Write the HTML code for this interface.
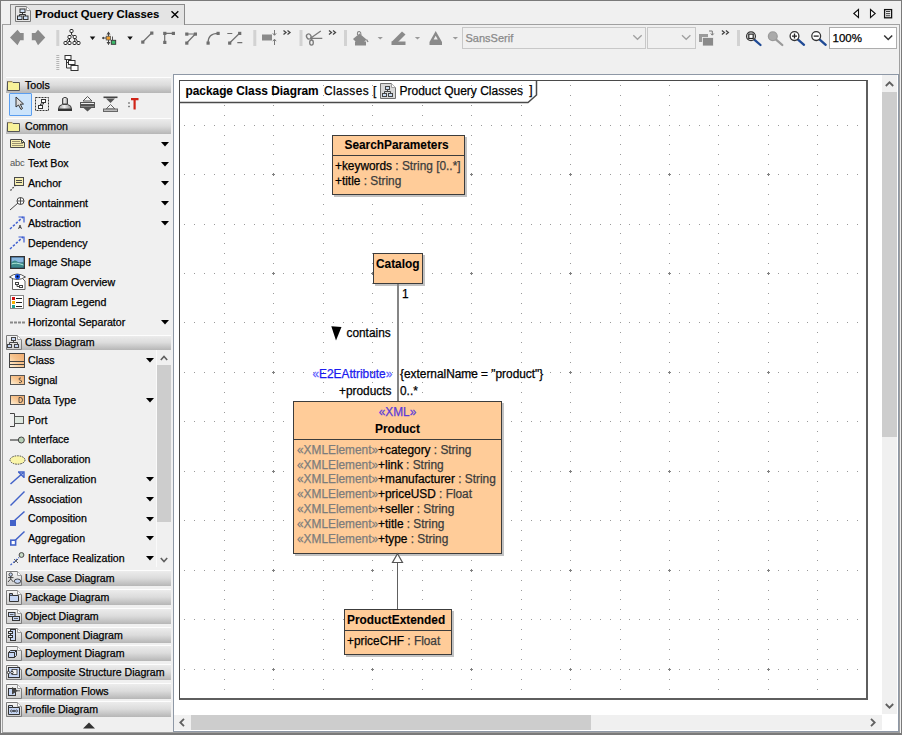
<!DOCTYPE html><html><head><meta charset='utf-8'><style>
*{margin:0;padding:0;box-sizing:border-box}
html,body{width:902px;height:735px;overflow:hidden;background:#f0f0f0;font-family:"Liberation Sans", sans-serif;}
.a{position:absolute}
.t{position:absolute;white-space:nowrap;line-height:1;-webkit-text-stroke:0.25px currentColor}
svg{position:absolute;overflow:visible}
</style></head><body><div class="a" style="left:0;top:0;width:902px;height:1px;background:#7a7a7a"></div><div class="a" style="left:0;top:0;width:1px;height:735px;background:#7a7a7a"></div><div class="a" style="left:901px;top:0;width:1px;height:735px;background:#7a7a7a"></div><div class="a" style="left:0;top:733px;width:902px;height:2px;background:#7a7a7a"></div><div class="a" style="left:2px;top:24px;width:898px;height:709px;border:1px solid #a0a0a0;"></div><div class="a" style="left:10px;top:4px;width:175px;height:21px;background:#e4e4e4;border:1px solid #8a8a8a;border-bottom:none"></div><div class="a" style="left:11px;top:24px;width:173px;height:1px;background:#e4e4e4"></div><svg style="left:15px;top:6px" width="16" height="16" viewBox="0 0 16 16">
<path d="M0.5 0.5 H11.5 L15.5 4.5 V15.5 H0.5 Z" fill="#e6e6e6" stroke="#7a7a7a"/>
<path d="M11.5 0.5 V4.5 H15.5" fill="#fff" stroke="#9a9a9a"/>
<rect x="5" y="3" width="5" height="3.5" fill="#cfe0f5" stroke="#333" stroke-width="1"/>
<path d="M7.5 6.5 V8.5 M4.5 8.5 H10.5 M4.5 8.5 V10 M10.5 8.5 V10" stroke="#333" fill="none"/>
<rect x="2.5" y="10" width="4.5" height="3.5" fill="#cfe0f5" stroke="#333"/>
<rect x="8.5" y="10" width="4.5" height="3.5" fill="#cfe0f5" stroke="#333"/>
</svg><div class="t" style="left:35px;top:9px;font-size:11.3px;font-weight:bold;color:#000;-webkit-text-stroke:0.1px #000">Product Query Classes</div><svg style="left:171px;top:11px" width="8" height="7" viewBox="0 0 8 7"><path d="M0.5 0.3 L7.3 6.7 M7.3 0.3 L0.5 6.7" stroke="#000" stroke-width="1.4"/></svg><svg style="left:853px;top:9px" width="40" height="10" viewBox="0 0 40 10">
<path d="M5.5 0.5 L0.8 4.5 L5.5 8.5 Z" fill="#fff" stroke="#111" stroke-width="1.1"/>
<path d="M17.5 0.5 L22.2 4.5 L17.5 8.5 Z" fill="#fff" stroke="#111" stroke-width="1.1"/>
<rect x="31.6" y="0.6" width="7" height="8.2" fill="#fff" stroke="#111" stroke-width="1.3"/>
<path d="M33 2.6 H37.2 M33 4.7 H37.2 M33 6.8 H37.2" stroke="#111" stroke-width="0.9"/>
</svg><div class="a" style="left:462px;top:27px;width:184px;height:22px;background:#f0f0f0;border:1px solid #c8c8c8"></div><div class="t" style="left:465.5px;top:32.5px;font-size:11px;color:#8a8a8a">SansSerif</div><div class="a" style="left:647px;top:27px;width:49px;height:22px;background:#f0f0f0;border:1px solid #c8c8c8"></div><div class="a" style="left:829px;top:27px;width:68px;height:22px;background:#fff;border:1px solid #adadad"></div><div class="t" style="left:832.5px;top:32.5px;font-size:11.5px;color:#000">100%</div><svg style="left:0;top:0" width="902" height="80" viewBox="0 0 902 80"><path d="M10 37.5 L17.5 29.75 L20.2 33 H23.7 V40.2 H20.2 L17.5 45.25 Z" fill="#8a8a8a"/><path d="M45.25 37.5 L38 29.75 L35.3 33 H31.8 V40.2 H35.3 L38 45.25 Z" fill="#8a8a8a"/><rect x="56.3" y="30.5" width="3" height="1" fill="#b4b4b4"/><rect x="56.3" y="32.5" width="3" height="1" fill="#b4b4b4"/><rect x="56.3" y="34.5" width="3" height="1" fill="#b4b4b4"/><rect x="56.3" y="36.5" width="3" height="1" fill="#b4b4b4"/><rect x="56.3" y="38.5" width="3" height="1" fill="#b4b4b4"/><rect x="56.3" y="40.5" width="3" height="1" fill="#b4b4b4"/><rect x="56.3" y="42.5" width="3" height="1" fill="#b4b4b4"/><rect x="56.3" y="44.5" width="3" height="1" fill="#b4b4b4"/><rect x="56.3" y="55" width="3" height="1" fill="#b4b4b4"/><rect x="56.3" y="57" width="3" height="1" fill="#b4b4b4"/><rect x="56.3" y="59" width="3" height="1" fill="#b4b4b4"/><rect x="56.3" y="61" width="3" height="1" fill="#b4b4b4"/><rect x="56.3" y="63" width="3" height="1" fill="#b4b4b4"/><rect x="56.3" y="65" width="3" height="1" fill="#b4b4b4"/><rect x="56.3" y="67" width="3" height="1" fill="#b4b4b4"/><rect x="56.3" y="69" width="3" height="1" fill="#b4b4b4"/><path d="M71.5 31 V34.5 M69.5 37 L71.5 34.5 L74.75 37 M69.5 37 L65.5 43 M69.5 37 V43 M74.75 37 V43 M74.75 37 L78.5 43" stroke="#333" stroke-width="1" fill="none"/><rect x="70.0" y="29.5" width="3" height="3" rx="0.8" fill="#fff" stroke="#222" stroke-width="1"/><rect x="68.0" y="35.5" width="3" height="3" rx="0.8" fill="#fff" stroke="#222" stroke-width="1"/><rect x="73.25" y="35.5" width="3" height="3" rx="0.8" fill="#fff" stroke="#222" stroke-width="1"/><rect x="64.0" y="41.5" width="3" height="3" rx="0.8" fill="#fff" stroke="#222" stroke-width="1"/><rect x="68.0" y="41.5" width="3" height="3" rx="0.8" fill="#fff" stroke="#222" stroke-width="1"/><rect x="73.0" y="41.5" width="3" height="3" rx="0.8" fill="#fff" stroke="#222" stroke-width="1"/><rect x="77.0" y="41.5" width="3" height="3" rx="0.8" fill="#fff" stroke="#222" stroke-width="1"/><path d="M89.8 36.5 H95.3 L92.55 40.1 Z" fill="#111"/><path d="M108.5 32 V44.5 M102 38 H107" stroke="#444" stroke-width="1"/><path d="M106.5 34.5 L108.5 31.5 L110.5 34.5 Z M106.5 42 L108.5 45 L110.5 42 Z M104 36.5 L102 38 L104 39.5 Z" fill="#444"/><rect x="106.2" y="36.2" width="4.3" height="3.8" fill="#f0a030" stroke="#555" stroke-width="0.8"/><path d="M112.5 36.5 V40" stroke="#555"/><rect x="111.3" y="40.3" width="4.4" height="4" fill="#3cb86a" stroke="#333" stroke-width="0.9"/><path d="M127.3 36.4 H132.8 L130.05 40.0 Z" fill="#111"/><path d="M142.7 42 L151.7 33" stroke="#707070" stroke-width="1.2" fill="none"/><rect x="141.2" y="40.5" width="3.2" height="3.2" fill="#6e6e6e"/><rect x="150.2" y="31.5" width="3.2" height="3.2" fill="#6e6e6e"/><path d="M164.7 42.3 V33.3 H173.3" stroke="#707070" stroke-width="1.2" fill="none"/><rect x="163.2" y="31.799999999999997" width="3.2" height="3.2" fill="#6e6e6e"/><rect x="171.8" y="31.799999999999997" width="3.2" height="3.2" fill="#6e6e6e"/><rect x="163.2" y="40.8" width="3.2" height="3.2" fill="#6e6e6e"/><path d="M186.7 34 H195.3 L186.7 43" stroke="#707070" stroke-width="1.2" fill="none"/><rect x="185.2" y="32.5" width="3.2" height="3.2" fill="#6e6e6e"/><rect x="193.8" y="32.5" width="3.2" height="3.2" fill="#6e6e6e"/><rect x="185.2" y="41.5" width="3.2" height="3.2" fill="#6e6e6e"/><path d="M208 43 Q208 33.3 218 33.3" stroke="#707070" stroke-width="1.2" fill="none"/><rect x="206.5" y="41.5" width="3.2" height="3.2" fill="#6e6e6e"/><rect x="216.5" y="31.799999999999997" width="3.2" height="3.2" fill="#6e6e6e"/><path d="M229.6 43 L239.6 33.3 M227.3 33.5 H232.3 M237.3 42.7 H242.3" stroke="#707070" stroke-width="1.2" fill="none"/><rect x="228.1" y="41.5" width="3.2" height="3.2" fill="#6e6e6e"/><rect x="238.1" y="31.799999999999997" width="3.2" height="3.2" fill="#6e6e6e"/><rect x="253.3" y="30.5" width="3" height="1" fill="#b4b4b4"/><rect x="253.3" y="32.5" width="3" height="1" fill="#b4b4b4"/><rect x="253.3" y="34.5" width="3" height="1" fill="#b4b4b4"/><rect x="253.3" y="36.5" width="3" height="1" fill="#b4b4b4"/><rect x="253.3" y="38.5" width="3" height="1" fill="#b4b4b4"/><rect x="253.3" y="40.5" width="3" height="1" fill="#b4b4b4"/><rect x="253.3" y="42.5" width="3" height="1" fill="#b4b4b4"/><rect x="253.3" y="44.5" width="3" height="1" fill="#b4b4b4"/><rect x="262" y="34.5" width="10" height="6" fill="#8a8a8a"/><path d="M274.5 30 V35 M274.5 39.5 V45 M272.8 33.3 L274.5 35.3 L276.2 33.3 M272.8 41.2 L274.5 39.2 L276.2 41.2" stroke="#777" stroke-width="1" fill="none"/><path d="M283.5 30.5 L286 32.5 L283.5 34.5 M287.5 30.5 L290 32.5 L287.5 34.5" stroke="#444" stroke-width="1.3" fill="none"/><rect x="299.5" y="30.5" width="3" height="1" fill="#b4b4b4"/><rect x="299.5" y="32.5" width="3" height="1" fill="#b4b4b4"/><rect x="299.5" y="34.5" width="3" height="1" fill="#b4b4b4"/><rect x="299.5" y="36.5" width="3" height="1" fill="#b4b4b4"/><rect x="299.5" y="38.5" width="3" height="1" fill="#b4b4b4"/><rect x="299.5" y="40.5" width="3" height="1" fill="#b4b4b4"/><rect x="299.5" y="42.5" width="3" height="1" fill="#b4b4b4"/><rect x="299.5" y="44.5" width="3" height="1" fill="#b4b4b4"/><ellipse cx="308.8" cy="36.5" rx="2.2" ry="2.6" transform="rotate(-30 308.8 36.5)" fill="none" stroke="#7a7a7a" stroke-width="1.3"/><ellipse cx="311.5" cy="42.6" rx="1.8" ry="2.6" fill="none" stroke="#7a7a7a" stroke-width="1.3"/><path d="M310.5 38.3 L320.8 31 M311.2 38.3 H322.3 M311.5 40 V38.5" stroke="#7a7a7a" stroke-width="1.3" fill="none"/><path d="M329.0 30.5 L331.5 32.5 L329.0 34.5 M333.0 30.5 L335.5 32.5 L333.0 34.5" stroke="#444" stroke-width="1.3" fill="none"/><rect x="344" y="30.5" width="3" height="1" fill="#b4b4b4"/><rect x="344" y="32.5" width="3" height="1" fill="#b4b4b4"/><rect x="344" y="34.5" width="3" height="1" fill="#b4b4b4"/><rect x="344" y="36.5" width="3" height="1" fill="#b4b4b4"/><rect x="344" y="38.5" width="3" height="1" fill="#b4b4b4"/><rect x="344" y="40.5" width="3" height="1" fill="#b4b4b4"/><rect x="344" y="42.5" width="3" height="1" fill="#b4b4b4"/><rect x="344" y="44.5" width="3" height="1" fill="#b4b4b4"/><path d="M353 39 L359.5 33.5 L366.5 39.5 L364 42 H356 Z" fill="#8a8a8a"/><rect x="355" y="41.5" width="11" height="4" fill="#8a8a8a"/><path d="M357.5 35 Q357 31 359.5 31.5 Q361 32 361 35" stroke="#888" stroke-width="1.1" fill="none"/><path d="M366.5 39.5 L368 42" stroke="#888" stroke-width="1.4"/><path d="M377.6 37 H382.90000000000003 L380.25 39.6 Z" fill="#9a9a9a"/><path d="M391.5 42 L402 31.5 L405.5 34.5 L398 42 Z" fill="#8a8a8a"/><rect x="391.5" y="41.5" width="14" height="3.5" fill="#8a8a8a"/><path d="M414.8 37 H420.1 L417.45 39.6 Z" fill="#9a9a9a"/><path d="M429.5 42 L435.7 31 L442 42 Z M433.6 39.5 H437.8 L435.7 35.8 Z" fill="#8a8a8a" fill-rule="evenodd"/><rect x="429.5" y="42" width="12.5" height="3" fill="#8a8a8a"/><path d="M452.7 37 H458.0 L455.34999999999997 39.6 Z" fill="#9a9a9a"/><path d="M633.3 35.3 L637.5 39.3 L641.7 35.3" stroke="#a0a0a0" stroke-width="1.3" fill="none"/><path d="M682 35.3 L686.2 39.3 L690.4 35.3" stroke="#a0a0a0" stroke-width="1.3" fill="none"/><rect x="699" y="34" width="9" height="8" fill="#9a9a9a"/><rect x="702.5" y="37.5" width="11" height="8.5" fill="#8a8a8a" stroke="#f0f0f0" stroke-width="0.8"/><path d="M709 31 H712.3 V35 M710.8 33.5 L712.3 35.2 L713.8 33.5" stroke="#777" stroke-width="1" fill="none"/><path d="M721.9 30.5 L724.4 32.5 L721.9 34.5 M725.9 30.5 L728.4 32.5 L725.9 34.5" stroke="#444" stroke-width="1.3" fill="none"/><rect x="737" y="30.5" width="3" height="1" fill="#b4b4b4"/><rect x="737" y="32.5" width="3" height="1" fill="#b4b4b4"/><rect x="737" y="34.5" width="3" height="1" fill="#b4b4b4"/><rect x="737" y="36.5" width="3" height="1" fill="#b4b4b4"/><rect x="737" y="38.5" width="3" height="1" fill="#b4b4b4"/><rect x="737" y="40.5" width="3" height="1" fill="#b4b4b4"/><rect x="737" y="42.5" width="3" height="1" fill="#b4b4b4"/><rect x="737" y="44.5" width="3" height="1" fill="#b4b4b4"/><path d="M754 39.3 L760.5 45.0" stroke="#1f4a95" stroke-width="2.3" stroke-linecap="round"/><circle cx="751" cy="36.3" r="4.4" fill="#fff" stroke="#333" stroke-width="1.3"/><rect x="748.8" y="34.1" width="4.4" height="4.4" fill="none" stroke="#222" stroke-width="1.2"/><path d="M775.8 39.3 L782.3 45.0" stroke="#9a9a9a" stroke-width="2.3" stroke-linecap="round"/><circle cx="772.8" cy="36.3" r="4.4" fill="#aaa" stroke="#9a9a9a" stroke-width="1.3"/><path d="M797.5 39.1 L804.0 44.8" stroke="#1f4a95" stroke-width="2.3" stroke-linecap="round"/><circle cx="794.5" cy="36.1" r="4.4" fill="#fff" stroke="#333" stroke-width="1.3"/><path d="M792 36.1 H797 M794.5 33.6 V38.6" stroke="#222" stroke-width="1.3"/><path d="M819.2 39.1 L825.7 44.8" stroke="#1f4a95" stroke-width="2.3" stroke-linecap="round"/><circle cx="816.2" cy="36.1" r="4.4" fill="#fff" stroke="#333" stroke-width="1.3"/><path d="M813.7 36.1 H818.7" stroke="#222" stroke-width="1.3"/><path d="M884.2 35.5 L888.2 39.5 L892.2 35.5" stroke="#333" stroke-width="1.5" fill="none"/><rect x="65" y="55.5" width="6" height="4" fill="#fff" stroke="#333"/><rect x="68.5" y="60.5" width="6.5" height="4" fill="#fff" stroke="#333"/><rect x="71" y="65.5" width="7" height="5" fill="#fff" stroke="#333"/><path d="M66.5 59.5 V68 H71 M66.5 62.5 H68.5" stroke="#333" fill="none"/></svg><div class="a" style="left:6px;top:77px;width:165px;height:15.6px;background:linear-gradient(#fdfdfd 0,#fdfdfd 1px,#ececec 1px,#dcdcdc 50%,#b6b6b6 100%)"></div><svg style="left:7px;top:80px" width="14" height="11" viewBox="0 0 14 11"><path d="M0.5 1.5 H5 L6 2.5 H12.5 V10.5 H0.5 Z" fill="#f7f29a" stroke="#555"/><path d="M1 2 H5" stroke="#e0c070"/></svg><div class="t" style="left:25px;top:79.98px;font-size:10.6px;color:#000">Tools</div><div class="a" style="left:9px;top:93px;width:23px;height:23px;background:#cce4fb;border:1px solid #5a9ef0;border-radius:1px"></div><svg style="left:15px;top:96px" width="10" height="15" viewBox="0 0 10 15"><path d="M1 1 L1 11 L3.5 9 L6 13.5 L7.5 12.5 L5.3 8.3 L8.5 8 Z" fill="#ddd" stroke="#333" stroke-width="1"/></svg><svg style="left:35px;top:97px" width="15" height="15" viewBox="0 0 15 15"><rect x="0.5" y="0.5" width="13" height="13" fill="none" stroke="#333" stroke-dasharray="2 1"/><rect x="6.5" y="2.5" width="4" height="3" fill="#fff" stroke="#333"/><rect x="3.5" y="8.5" width="4" height="3" fill="#fff" stroke="#333"/><path d="M8.5 5.5 V7 H5.5 V8.5" stroke="#333" fill="none"/></svg><svg style="left:57px;top:96px" width="16" height="16" viewBox="0 0 16 16"><defs><linearGradient id="sg" x1="0" y1="0" x2="1" y2="0"><stop offset="0" stop-color="#9a9a9a"/><stop offset="0.45" stop-color="#f0f0f0"/><stop offset="1" stop-color="#8a8a8a"/></linearGradient></defs><path d="M5.5 2.5 Q8 0 10.5 2.5 V8 H5.5 Z" fill="url(#sg)" stroke="#444"/><path d="M1.5 13 Q1.5 9 5.5 8.5 H10.5 Q14.5 9 14.5 13 Z" fill="url(#sg)" stroke="#444"/><rect x="1" y="13" width="14" height="2" fill="#333"/></svg><svg style="left:80px;top:96px" width="15" height="16" viewBox="0 0 15 16"><path d="M7.5 0.5 L3 5 H12 Z" fill="#f4f4f4" stroke="#555"/><rect x="0.5" y="6.5" width="14" height="2" fill="#eee" stroke="#555"/><rect x="0.5" y="9.5" width="14" height="2" fill="#888" stroke="#555"/><path d="M7.5 15.5 L3 11.5 H12 Z" fill="#555"/></svg><svg style="left:103px;top:96px" width="15" height="16" viewBox="0 0 15 16"><rect x="0.5" y="0.5" width="14" height="1.6" fill="#444"/><path d="M7.5 7 L3 2.5 H12 Z" fill="#555"/><path d="M7.5 8.5 L3 13 H12 Z" fill="#f4f4f4" stroke="#666"/><rect x="0.5" y="13" width="14" height="2.5" fill="#bbb" stroke="#666"/></svg><svg style="left:127px;top:97px" width="13" height="14" viewBox="0 0 13 14"><path d="M4 2.2 H11.5 M7.6 2 V12.5" stroke="#d02418" stroke-width="2.2"/><rect x="1.3" y="5.3" width="1.4" height="1.4" fill="#555"/><rect x="1.3" y="8.8" width="1.4" height="1.4" fill="#555"/></svg><div class="a" style="left:6px;top:118px;width:165px;height:15.5px;background:linear-gradient(#fdfdfd 0,#fdfdfd 1px,#ececec 1px,#dcdcdc 50%,#b6b6b6 100%)"></div><svg style="left:7px;top:121px" width="14" height="11" viewBox="0 0 14 11"><path d="M0.5 1.5 H5 L6 2.5 H12.5 V10.5 H0.5 Z" fill="#f7f29a" stroke="#555"/><path d="M1 2 H5" stroke="#e0c070"/></svg><div class="t" style="left:25px;top:121.10px;font-size:10.6px;color:#000">Common</div><div class="t" style="left:28px;top:138.70px;font-size:10.6px;color:#000">Note</div><svg style="left:10px;top:139px" width="16" height="10" viewBox="0 0 16 10"><path d="M0.5 0.5 H11.5 L14.5 3.5 V8.5 H0.5 Z" fill="#f6eeb0" stroke="#4a4a4a"/><path d="M2 2.5 H10 M2 4.5 H13 M2 6.5 H13" stroke="#9a9070" stroke-width="1"/><path d="M11.5 0.5 V3.5 H14.5" fill="none" stroke="#4a4a4a"/></svg><svg style="left:161px;top:141.80px" width="8" height="5" viewBox="0 0 8 5"><path d="M0 0 H8 L4 4.5 Z" fill="#000"/></svg><div class="t" style="left:28px;top:158.48px;font-size:10.6px;color:#000">Text Box</div><div class="t" style="left:10px;top:157.98px;font-size:9.4px;color:#555;-webkit-text-stroke:0;letter-spacing:-0.2px">abc</div><svg style="left:161px;top:161.58px" width="8" height="5" viewBox="0 0 8 5"><path d="M0 0 H8 L4 4.5 Z" fill="#000"/></svg><div class="t" style="left:28px;top:178.26px;font-size:10.6px;color:#000">Anchor</div><svg style="left:9px;top:177px" width="17" height="16" viewBox="0 0 17 16"><rect x="5.5" y="0.5" width="9" height="8" fill="#f6eeb0" stroke="#4a4a4a"/><path d="M7 3.5 H13 M7 5.5 H13" stroke="#4a4a4a" stroke-width="1"/><path d="M1.5 13.5 L6.5 8" stroke="#333" stroke-width="1.2" stroke-dasharray="1.6 1.4"/></svg><svg style="left:161px;top:181.36px" width="8" height="5" viewBox="0 0 8 5"><path d="M0 0 H8 L4 4.5 Z" fill="#000"/></svg><div class="t" style="left:28px;top:198.04px;font-size:10.6px;color:#000">Containment</div><svg style="left:9px;top:196px" width="17" height="16" viewBox="0 0 17 16"><circle cx="11.5" cy="5" r="3.5" fill="#fff" stroke="#444"/><path d="M8 5 H15 M11.5 1.5 V8.5" stroke="#444" stroke-width="0.9"/><path d="M1 14 L9 7" stroke="#444"/></svg><svg style="left:161px;top:201.14px" width="8" height="5" viewBox="0 0 8 5"><path d="M0 0 H8 L4 4.5 Z" fill="#000"/></svg><div class="t" style="left:28px;top:217.82px;font-size:10.6px;color:#000">Abstraction</div><svg style="left:9px;top:215px" width="17" height="16" viewBox="0 0 17 16"><path d="M1 14 L14 2" stroke="#4060d0" stroke-width="1.5" stroke-dasharray="2.5 1.5"/><path d="M9.5 2 H15 V7.5" stroke="#3c5cd0" stroke-width="1.2" fill="none"/><path d="M9.5 14 L11 10 L12.5 14 M10 12.5 H12" stroke="#333" stroke-width="0.8" fill="none"/></svg><svg style="left:161px;top:220.92px" width="8" height="5" viewBox="0 0 8 5"><path d="M0 0 H8 L4 4.5 Z" fill="#000"/></svg><div class="t" style="left:28px;top:237.60px;font-size:10.6px;color:#000">Dependency</div><svg style="left:9px;top:235px" width="17" height="16" viewBox="0 0 17 16"><path d="M1 14 L14 2" stroke="#4060d0" stroke-width="1.5" stroke-dasharray="2.5 1.5"/><path d="M9.5 2 H15 V7.5" stroke="#3c5cd0" stroke-width="1.2" fill="none"/></svg><div class="t" style="left:28px;top:257.38px;font-size:10.6px;color:#000">Image Shape</div><svg style="left:10px;top:256px" width="15" height="13" viewBox="0 0 15 13"><rect x="0.5" y="0.5" width="14" height="12" fill="#2a4a6a" stroke="#333"/><rect x="1.5" y="1.5" width="12" height="5" fill="#8ab8e0"/><path d="M1.5 6 Q5 3 8 6 T13.5 5 V11.5 H1.5 Z" fill="#3d8a8a"/><path d="M1.5 8 Q6 6 13.5 9" stroke="#cfe" fill="none" stroke-width="0.8"/></svg><div class="t" style="left:28px;top:277.16px;font-size:10.6px;color:#000">Diagram Overview</div><svg style="left:9px;top:273px" width="17" height="17" viewBox="0 0 17 17"><path d="M3.5 5.5 H13.5 L16 8 V16.5 H3.5 Z" fill="#fff" stroke="#666"/><rect x="6.5" y="9.5" width="3" height="2" fill="none" stroke="#444"/><rect x="10.5" y="12.5" width="3" height="2" fill="none" stroke="#444"/><path d="M8 11.5 V13.5 H10.5" stroke="#444" fill="none"/><path d="M0.5 4 Q8 -2 16.5 4 Q8 9 0.5 4 Z" fill="#fff" stroke="#555"/><circle cx="8.5" cy="3.6" r="2.6" fill="#1850e0"/><circle cx="8.5" cy="3.6" r="1" fill="#000"/></svg><div class="t" style="left:28px;top:296.94px;font-size:10.6px;color:#000">Diagram Legend</div><svg style="left:10px;top:295px" width="15" height="15" viewBox="0 0 15 15"><rect x="0.5" y="0.5" width="13" height="13" fill="#fff" stroke="#888"/><rect x="2" y="2" width="3" height="3" fill="#d01010"/><rect x="2" y="6" width="3" height="3" fill="#f8b000"/><rect x="2" y="10" width="3" height="3" fill="#20a090"/><path d="M6 3.5 H12 M6 7.5 H12 M6 11.5 H12" stroke="#222" stroke-width="1.2"/></svg><div class="t" style="left:28px;top:316.72px;font-size:10.6px;color:#000">Horizontal Separator</div><svg style="left:10px;top:321px" width="16" height="3" viewBox="0 0 16 3"><path d="M0 1.5 H15" stroke="#888" stroke-width="2" stroke-dasharray="3 1"/></svg><svg style="left:161px;top:319.82px" width="8" height="5" viewBox="0 0 8 5"><path d="M0 0 H8 L4 4.5 Z" fill="#000"/></svg><div class="a" style="left:6px;top:335px;width:165px;height:15px;background:linear-gradient(#fdfdfd 0,#fdfdfd 1px,#ececec 1px,#dcdcdc 50%,#b6b6b6 100%)"></div><svg style="left:6px;top:335px" width="17" height="16" viewBox="0 0 17 16"><defs><linearGradient id="dg" x1="0" y1="0" x2="0" y2="1"><stop offset="0" stop-color="#f6f6f6"/><stop offset="1" stop-color="#cdcdcd"/></linearGradient></defs><path d="M0.5 0.5 H11.5 L15.5 4.5 V14.5 H0.5 Z" fill="url(#dg)" stroke="#7c7c7c"/><path d="M11.5 0.5 V4.5 H15.5" fill="#fdfdfd" stroke="#9c9c9c"/><rect x="5.5" y="2.5" width="4" height="3" fill="#c6d6f4" stroke="#444"/><path d="M7.5 5.5 V7.5 M3.5 7.5 H11.5 M3.5 7.5 V9 M11.5 7.5 V9" stroke="#444" fill="none"/><rect x="1.5" y="9.5" width="4" height="3" fill="#c6d6f4" stroke="#444"/><rect x="8.5" y="9.5" width="4" height="3" fill="#c6d6f4" stroke="#444"/></svg><div class="t" style="left:25px;top:337.10px;font-size:10.6px;color:#000">Class Diagram</div><div class="t" style="left:28px;top:355.20px;font-size:10.6px;color:#000">Class</div><svg style="left:9px;top:353px" width="16" height="15" viewBox="0 0 16 15"><defs><linearGradient id="og" x1="0" y1="1" x2="1" y2="0"><stop offset="0" stop-color="#fff4dc"/><stop offset="0.5" stop-color="#f7c48e"/><stop offset="1" stop-color="#eeaa70"/></linearGradient></defs><rect x="0.5" y="0.5" width="15" height="14" fill="url(#og)" stroke="#444"/><path d="M0.5 8.5 H15.5 M0.5 11.5 H15.5" stroke="#444" stroke-width="1"/></svg><svg style="left:145.5px;top:358.30px" width="8" height="5" viewBox="0 0 8 5"><path d="M0 0 H8 L4 4.5 Z" fill="#000"/></svg><div class="t" style="left:28px;top:374.98px;font-size:10.6px;color:#000">Signal</div><svg style="left:10px;top:375px" width="15" height="10" viewBox="0 0 15 10"><rect x="0.5" y="0.5" width="14" height="9" fill="url(#og)" stroke="#555"/><path d="M11 3 Q9 2.5 9 4 Q9 5 10.5 5.3 Q12 5.6 11.5 7 Q11 8 9 7.5" stroke="#333" fill="none" stroke-width="0.8"/></svg><div class="t" style="left:28px;top:394.76px;font-size:10.6px;color:#000">Data Type</div><svg style="left:10px;top:395px" width="15" height="10" viewBox="0 0 15 10"><rect x="0.5" y="0.5" width="14" height="9" fill="url(#og)" stroke="#555"/><path d="M9 2.5 V7.5 H10.5 Q12.5 7.5 12.5 5 Q12.5 2.5 10.5 2.5 Z" stroke="#333" fill="none" stroke-width="0.8"/></svg><svg style="left:145.5px;top:397.86px" width="8" height="5" viewBox="0 0 8 5"><path d="M0 0 H8 L4 4.5 Z" fill="#000"/></svg><div class="t" style="left:28px;top:414.54px;font-size:10.6px;color:#000">Port</div><svg style="left:10px;top:413px" width="15" height="14" viewBox="0 0 15 14"><path d="M0 0.5 H4.5 V13.5 H0" stroke="#444" fill="none"/><rect x="4.5" y="3.5" width="9" height="7" fill="#dfe8e0" stroke="#555"/></svg><div class="t" style="left:28px;top:434.32px;font-size:10.6px;color:#000">Interface</div><svg style="left:9px;top:436px" width="17" height="8" viewBox="0 0 17 8"><path d="M1 4 H9" stroke="#444" stroke-width="1.2"/><circle cx="12.3" cy="4" r="3" fill="#b8d0b8" stroke="#444"/></svg><div class="t" style="left:28px;top:454.10px;font-size:10.6px;color:#000">Collaboration</div><svg style="left:9px;top:455px" width="17" height="10" viewBox="0 0 17 10"><ellipse cx="8.5" cy="5" rx="7.5" ry="4.2" fill="#f9f4a8" stroke="#444" stroke-dasharray="1.5 1"/></svg><div class="t" style="left:28px;top:473.88px;font-size:10.6px;color:#000">Generalization</div><svg style="left:9px;top:471px" width="17" height="15" viewBox="0 0 17 15"><path d="M1.5 13 L14.5 1.5" stroke="#4262c8" stroke-width="1.5"/><path d="M9 1 H15 V7 M9.5 1 L15 6.5" stroke="#4262c8" stroke-width="1.4" fill="none"/></svg><svg style="left:145.5px;top:476.98px" width="8" height="5" viewBox="0 0 8 5"><path d="M0 0 H8 L4 4.5 Z" fill="#000"/></svg><div class="t" style="left:28px;top:493.66px;font-size:10.6px;color:#000">Association</div><svg style="left:9px;top:491px" width="17" height="16" viewBox="0 0 17 16"><path d="M1.5 14.5 L15.5 0.5" stroke="#4262c8" stroke-width="1.5"/></svg><svg style="left:145.5px;top:496.76px" width="8" height="5" viewBox="0 0 8 5"><path d="M0 0 H8 L4 4.5 Z" fill="#000"/></svg><div class="t" style="left:28px;top:513.44px;font-size:10.6px;color:#000">Composition</div><svg style="left:9px;top:511px" width="17" height="16" viewBox="0 0 17 16"><path d="M5 10 L15.5 0.5" stroke="#4262c8" stroke-width="1.5"/><rect x="1" y="9" width="6" height="6" fill="#4262c8"/></svg><svg style="left:145.5px;top:516.54px" width="8" height="5" viewBox="0 0 8 5"><path d="M0 0 H8 L4 4.5 Z" fill="#000"/></svg><div class="t" style="left:28px;top:533.22px;font-size:10.6px;color:#000">Aggregation</div><svg style="left:9px;top:531px" width="17" height="16" viewBox="0 0 17 16"><path d="M6 9.5 L15.5 0.5" stroke="#4262c8" stroke-width="1.5"/><rect x="1.8" y="9.2" width="4.8" height="4.8" fill="#fff" stroke="#4262c8" stroke-width="1.6"/></svg><svg style="left:145.5px;top:536.32px" width="8" height="5" viewBox="0 0 8 5"><path d="M0 0 H8 L4 4.5 Z" fill="#000"/></svg><div class="t" style="left:28px;top:553.00px;font-size:10.6px;color:#000">Interface Realization</div><svg style="left:9px;top:551px" width="17" height="16" viewBox="0 0 17 16"><path d="M1.5 14 L10 6.5" stroke="#4262c8" stroke-width="1.2" stroke-dasharray="2 1.5"/><circle cx="12.5" cy="4" r="2.4" fill="#c8dcc8" stroke="#444"/><path d="M5 8 L9 12 M9 8 L5 12" stroke="#444" stroke-width="0.8"/></svg><svg style="left:145.5px;top:556.10px" width="8" height="5" viewBox="0 0 8 5"><path d="M0 0 H8 L4 4.5 Z" fill="#000"/></svg><div class="a" style="left:156px;top:350px;width:1px;height:217px;background:#fafafa"></div><div class="a" style="left:157px;top:350px;width:14px;height:217px;background:#f0f0f0"></div><div class="a" style="left:157px;top:365px;width:14px;height:157px;background:#cdcdcd"></div><svg style="left:160px;top:355px" width="8" height="6" viewBox="0 0 8 6"><path d="M0.8 5 L4 1.5 L7.2 5" stroke="#606060" stroke-width="1.6" fill="none"/></svg><svg style="left:160px;top:557px" width="8" height="6" viewBox="0 0 8 6"><path d="M0.8 1 L4 4.5 L7.2 1" stroke="#606060" stroke-width="1.6" fill="none"/></svg><div class="a" style="left:6px;top:570px;width:165px;height:16px;background:linear-gradient(#fdfdfd 0,#fdfdfd 1px,#ececec 1px,#dcdcdc 50%,#b6b6b6 100%)"></div><svg style="left:6px;top:571px" width="17" height="16" viewBox="0 0 17 16"><defs><linearGradient id="dg" x1="0" y1="0" x2="0" y2="1"><stop offset="0" stop-color="#f6f6f6"/><stop offset="1" stop-color="#cdcdcd"/></linearGradient></defs><path d="M0.5 0.5 H11.5 L15.5 4.5 V14.5 H0.5 Z" fill="url(#dg)" stroke="#7c7c7c"/><path d="M11.5 0.5 V4.5 H15.5" fill="#fdfdfd" stroke="#9c9c9c"/><circle cx="4.7" cy="3.6" r="1.7" fill="#c6d6f4" stroke="#333" stroke-width="0.9"/><path d="M4.7 5.3 V8 M2 6.6 H7.5 M4.7 8 L2 11 M4.7 8 L7.4 11" stroke="#333" stroke-width="0.9" fill="none"/><ellipse cx="11.5" cy="10.2" rx="3.2" ry="2.2" fill="#c6d6f4" stroke="#333" stroke-width="0.9"/></svg><div class="t" style="left:25px;top:572.90px;font-size:10.6px;color:#000">Use Case Diagram</div><div class="a" style="left:6px;top:589px;width:165px;height:16px;background:linear-gradient(#fdfdfd 0,#fdfdfd 1px,#ececec 1px,#dcdcdc 50%,#b6b6b6 100%)"></div><svg style="left:6px;top:590px" width="17" height="16" viewBox="0 0 17 16"><defs><linearGradient id="dg" x1="0" y1="0" x2="0" y2="1"><stop offset="0" stop-color="#f6f6f6"/><stop offset="1" stop-color="#cdcdcd"/></linearGradient></defs><path d="M0.5 0.5 H11.5 L15.5 4.5 V14.5 H0.5 Z" fill="url(#dg)" stroke="#7c7c7c"/><path d="M11.5 0.5 V4.5 H15.5" fill="#fdfdfd" stroke="#9c9c9c"/><path d="M3.5 3.5 H6.5 V5.5 H12.5 V11.5 H3.5 Z" fill="#c6d6f4" stroke="#333"/><path d="M3.5 5.5 H6.5" stroke="#333"/><rect x="4" y="4" width="2" height="1.2" fill="#8aa0c8"/></svg><div class="t" style="left:25px;top:591.90px;font-size:10.6px;color:#000">Package Diagram</div><div class="a" style="left:6px;top:608px;width:165px;height:16px;background:linear-gradient(#fdfdfd 0,#fdfdfd 1px,#ececec 1px,#dcdcdc 50%,#b6b6b6 100%)"></div><svg style="left:6px;top:609px" width="17" height="16" viewBox="0 0 17 16"><defs><linearGradient id="dg" x1="0" y1="0" x2="0" y2="1"><stop offset="0" stop-color="#f6f6f6"/><stop offset="1" stop-color="#cdcdcd"/></linearGradient></defs><path d="M0.5 0.5 H11.5 L15.5 4.5 V14.5 H0.5 Z" fill="url(#dg)" stroke="#7c7c7c"/><path d="M11.5 0.5 V4.5 H15.5" fill="#fdfdfd" stroke="#9c9c9c"/><rect x="2.5" y="3.5" width="6.5" height="4" fill="#c6d6f4" stroke="#333"/><rect x="6.5" y="7.5" width="7" height="4" fill="#c6d6f4" stroke="#333"/><path d="M4 5.5 H7.5 M8 9.5 H12" stroke="#555" stroke-width="0.9"/></svg><div class="t" style="left:25px;top:610.90px;font-size:10.6px;color:#000">Object Diagram</div><div class="a" style="left:6px;top:627px;width:165px;height:16px;background:linear-gradient(#fdfdfd 0,#fdfdfd 1px,#ececec 1px,#dcdcdc 50%,#b6b6b6 100%)"></div><svg style="left:6px;top:628px" width="17" height="16" viewBox="0 0 17 16"><defs><linearGradient id="dg" x1="0" y1="0" x2="0" y2="1"><stop offset="0" stop-color="#f6f6f6"/><stop offset="1" stop-color="#cdcdcd"/></linearGradient></defs><path d="M0.5 0.5 H11.5 L15.5 4.5 V14.5 H0.5 Z" fill="url(#dg)" stroke="#7c7c7c"/><path d="M11.5 0.5 V4.5 H15.5" fill="#fdfdfd" stroke="#9c9c9c"/><rect x="4.5" y="1.5" width="5" height="11" fill="#c6d6f4" stroke="#333"/><rect x="2.5" y="3.5" width="4" height="2" fill="#e6eefa" stroke="#333"/><rect x="2.5" y="7.5" width="4" height="2" fill="#e6eefa" stroke="#333"/></svg><div class="t" style="left:25px;top:629.90px;font-size:10.6px;color:#000">Component Diagram</div><div class="a" style="left:6px;top:645px;width:165px;height:16px;background:linear-gradient(#fdfdfd 0,#fdfdfd 1px,#ececec 1px,#dcdcdc 50%,#b6b6b6 100%)"></div><svg style="left:6px;top:646px" width="17" height="16" viewBox="0 0 17 16"><defs><linearGradient id="dg" x1="0" y1="0" x2="0" y2="1"><stop offset="0" stop-color="#f6f6f6"/><stop offset="1" stop-color="#cdcdcd"/></linearGradient></defs><path d="M0.5 0.5 H11.5 L15.5 4.5 V14.5 H0.5 Z" fill="url(#dg)" stroke="#7c7c7c"/><path d="M11.5 0.5 V4.5 H15.5" fill="#fdfdfd" stroke="#9c9c9c"/><path d="M2.5 6.5 L4.5 4.5 H10.5 V9.5 L8.5 11.5 H2.5 Z" fill="#c6d6f4" stroke="#333"/><path d="M2.5 6.5 H8.5 V11.5 M8.5 6.5 L10.5 4.5" stroke="#333" fill="none"/></svg><div class="t" style="left:25px;top:647.90px;font-size:10.6px;color:#000">Deployment Diagram</div><div class="a" style="left:6px;top:664px;width:165px;height:16px;background:linear-gradient(#fdfdfd 0,#fdfdfd 1px,#ececec 1px,#dcdcdc 50%,#b6b6b6 100%)"></div><svg style="left:6px;top:665px" width="17" height="16" viewBox="0 0 17 16"><defs><linearGradient id="dg" x1="0" y1="0" x2="0" y2="1"><stop offset="0" stop-color="#f6f6f6"/><stop offset="1" stop-color="#cdcdcd"/></linearGradient></defs><path d="M0.5 0.5 H11.5 L15.5 4.5 V14.5 H0.5 Z" fill="url(#dg)" stroke="#7c7c7c"/><path d="M11.5 0.5 V4.5 H15.5" fill="#fdfdfd" stroke="#9c9c9c"/><rect x="2.5" y="2.5" width="11" height="10" fill="#c6d6f4" stroke="#333"/><rect x="6" y="4.5" width="5" height="5" fill="#f4f4f4" stroke="#333" stroke-width="0.8"/><circle cx="2.5" cy="7.5" r="1.2" fill="#fff" stroke="#222" stroke-width="0.9"/><circle cx="6" cy="7.5" r="1.2" fill="#fff" stroke="#222" stroke-width="0.9"/></svg><div class="t" style="left:25px;top:666.90px;font-size:10.6px;color:#000">Composite Structure Diagram</div><div class="a" style="left:6px;top:683px;width:165px;height:16px;background:linear-gradient(#fdfdfd 0,#fdfdfd 1px,#ececec 1px,#dcdcdc 50%,#b6b6b6 100%)"></div><svg style="left:6px;top:684px" width="17" height="16" viewBox="0 0 17 16"><defs><linearGradient id="dg" x1="0" y1="0" x2="0" y2="1"><stop offset="0" stop-color="#f6f6f6"/><stop offset="1" stop-color="#cdcdcd"/></linearGradient></defs><path d="M0.5 0.5 H11.5 L15.5 4.5 V14.5 H0.5 Z" fill="url(#dg)" stroke="#7c7c7c"/><path d="M11.5 0.5 V4.5 H15.5" fill="#fdfdfd" stroke="#9c9c9c"/><rect x="2.5" y="4.5" width="7" height="7" fill="#c6d6f4" stroke="#333"/><path d="M6 3 L12 6.8 L6 10.5 Z" fill="#444"/><path d="M11 6.8 H14" stroke="#555"/></svg><div class="t" style="left:25px;top:685.90px;font-size:10.6px;color:#000">Information Flows</div><div class="a" style="left:6px;top:701px;width:165px;height:16px;background:linear-gradient(#fdfdfd 0,#fdfdfd 1px,#ececec 1px,#dcdcdc 50%,#b6b6b6 100%)"></div><svg style="left:6px;top:702px" width="17" height="16" viewBox="0 0 17 16"><defs><linearGradient id="dg" x1="0" y1="0" x2="0" y2="1"><stop offset="0" stop-color="#f6f6f6"/><stop offset="1" stop-color="#cdcdcd"/></linearGradient></defs><path d="M0.5 0.5 H11.5 L15.5 4.5 V14.5 H0.5 Z" fill="url(#dg)" stroke="#7c7c7c"/><path d="M11.5 0.5 V4.5 H15.5" fill="#fdfdfd" stroke="#9c9c9c"/><path d="M2.5 3.5 H6.5 V5.5 H13.5 V12.5 H2.5 Z" fill="#c6d6f4" stroke="#333"/><path d="M2.5 5.5 H6.5" stroke="#333"/><path d="M4.2 9 L5.5 8 L6.8 9 L5.5 10 Z M6.8 9 L8 8 L9.3 9 L8 10 Z M9.3 9 L10.5 8 L11.8 9 L10.5 10 Z" fill="none" stroke="#222" stroke-width="0.8"/></svg><div class="t" style="left:25px;top:703.90px;font-size:10.6px;color:#000">Profile Diagram</div><svg style="left:83px;top:722px" width="12" height="7" viewBox="0 0 12 7"><path d="M0 6.5 L6 0.5 L12 6.5 Z" fill="#333"/></svg><div class="a" style="left:173px;top:74px;width:726px;height:658px;background:#fff;border:1px solid #8e98a6"></div><svg style="left:0;top:0" width="902" height="735" viewBox="0 0 902 735"><path d="M184 125h1v1h-1zM184 174h1v1h-1zM184 224h1v1h-1zM184 273h1v1h-1zM184 322h1v1h-1zM184 372h1v1h-1zM184 421h1v1h-1zM184 471h1v1h-1zM184 520h1v1h-1zM184 570h1v1h-1zM184 619h1v1h-1zM184 669h1v1h-1zM194 125h1v1h-1zM194 174h1v1h-1zM194 224h1v1h-1zM194 273h1v1h-1zM194 322h1v1h-1zM194 372h1v1h-1zM194 421h1v1h-1zM194 471h1v1h-1zM194 520h1v1h-1zM194 570h1v1h-1zM194 619h1v1h-1zM194 669h1v1h-1zM204 125h1v1h-1zM204 174h1v1h-1zM204 224h1v1h-1zM204 273h1v1h-1zM204 322h1v1h-1zM204 372h1v1h-1zM204 421h1v1h-1zM204 471h1v1h-1zM204 520h1v1h-1zM204 570h1v1h-1zM204 619h1v1h-1zM204 669h1v1h-1zM214 125h1v1h-1zM214 174h1v1h-1zM214 224h1v1h-1zM214 273h1v1h-1zM214 322h1v1h-1zM214 372h1v1h-1zM214 421h1v1h-1zM214 471h1v1h-1zM214 520h1v1h-1zM214 570h1v1h-1zM214 619h1v1h-1zM214 669h1v1h-1zM224 85h1v1h-1zM224 95h1v1h-1zM224 105h1v1h-1zM224 115h1v1h-1zM224 125h1v1h-1zM224 135h1v1h-1zM224 144h1v1h-1zM224 154h1v1h-1zM224 164h1v1h-1zM224 174h1v1h-1zM224 184h1v1h-1zM224 194h1v1h-1zM224 204h1v1h-1zM224 214h1v1h-1zM224 224h1v1h-1zM224 233h1v1h-1zM224 243h1v1h-1zM224 253h1v1h-1zM224 263h1v1h-1zM224 273h1v1h-1zM224 283h1v1h-1zM224 293h1v1h-1zM224 303h1v1h-1zM224 313h1v1h-1zM224 322h1v1h-1zM224 332h1v1h-1zM224 342h1v1h-1zM224 352h1v1h-1zM224 362h1v1h-1zM224 372h1v1h-1zM224 382h1v1h-1zM224 392h1v1h-1zM224 402h1v1h-1zM224 412h1v1h-1zM224 421h1v1h-1zM224 431h1v1h-1zM224 441h1v1h-1zM224 451h1v1h-1zM224 461h1v1h-1zM224 471h1v1h-1zM224 481h1v1h-1zM224 491h1v1h-1zM224 501h1v1h-1zM224 510h1v1h-1zM224 520h1v1h-1zM224 530h1v1h-1zM224 540h1v1h-1zM224 550h1v1h-1zM224 560h1v1h-1zM224 570h1v1h-1zM224 580h1v1h-1zM224 590h1v1h-1zM224 599h1v1h-1zM224 609h1v1h-1zM224 619h1v1h-1zM224 629h1v1h-1zM224 639h1v1h-1zM224 649h1v1h-1zM224 659h1v1h-1zM224 669h1v1h-1zM224 679h1v1h-1zM224 689h1v1h-1zM234 125h1v1h-1zM234 174h1v1h-1zM234 224h1v1h-1zM234 273h1v1h-1zM234 322h1v1h-1zM234 372h1v1h-1zM234 421h1v1h-1zM234 471h1v1h-1zM234 520h1v1h-1zM234 570h1v1h-1zM234 619h1v1h-1zM234 669h1v1h-1zM244 125h1v1h-1zM244 174h1v1h-1zM244 224h1v1h-1zM244 273h1v1h-1zM244 322h1v1h-1zM244 372h1v1h-1zM244 421h1v1h-1zM244 471h1v1h-1zM244 520h1v1h-1zM244 570h1v1h-1zM244 619h1v1h-1zM244 669h1v1h-1zM254 125h1v1h-1zM254 174h1v1h-1zM254 224h1v1h-1zM254 273h1v1h-1zM254 322h1v1h-1zM254 372h1v1h-1zM254 421h1v1h-1zM254 471h1v1h-1zM254 520h1v1h-1zM254 570h1v1h-1zM254 619h1v1h-1zM254 669h1v1h-1zM263 125h1v1h-1zM263 174h1v1h-1zM263 224h1v1h-1zM263 273h1v1h-1zM263 322h1v1h-1zM263 372h1v1h-1zM263 421h1v1h-1zM263 471h1v1h-1zM263 520h1v1h-1zM263 570h1v1h-1zM263 619h1v1h-1zM263 669h1v1h-1zM273 85h1v1h-1zM273 95h1v1h-1zM273 105h1v1h-1zM273 115h1v1h-1zM273 125h1v1h-1zM273 135h1v1h-1zM273 144h1v1h-1zM273 154h1v1h-1zM273 164h1v1h-1zM273 174h1v1h-1zM273 184h1v1h-1zM273 194h1v1h-1zM273 204h1v1h-1zM273 214h1v1h-1zM273 224h1v1h-1zM273 233h1v1h-1zM273 243h1v1h-1zM273 253h1v1h-1zM273 263h1v1h-1zM273 273h1v1h-1zM273 283h1v1h-1zM273 293h1v1h-1zM273 303h1v1h-1zM273 313h1v1h-1zM273 322h1v1h-1zM273 332h1v1h-1zM273 342h1v1h-1zM273 352h1v1h-1zM273 362h1v1h-1zM273 372h1v1h-1zM273 382h1v1h-1zM273 392h1v1h-1zM273 402h1v1h-1zM273 412h1v1h-1zM273 421h1v1h-1zM273 431h1v1h-1zM273 441h1v1h-1zM273 451h1v1h-1zM273 461h1v1h-1zM273 471h1v1h-1zM273 481h1v1h-1zM273 491h1v1h-1zM273 501h1v1h-1zM273 510h1v1h-1zM273 520h1v1h-1zM273 530h1v1h-1zM273 540h1v1h-1zM273 550h1v1h-1zM273 560h1v1h-1zM273 570h1v1h-1zM273 580h1v1h-1zM273 590h1v1h-1zM273 599h1v1h-1zM273 609h1v1h-1zM273 619h1v1h-1zM273 629h1v1h-1zM273 639h1v1h-1zM273 649h1v1h-1zM273 659h1v1h-1zM273 669h1v1h-1zM273 679h1v1h-1zM273 689h1v1h-1zM283 125h1v1h-1zM283 174h1v1h-1zM283 224h1v1h-1zM283 273h1v1h-1zM283 322h1v1h-1zM283 372h1v1h-1zM283 421h1v1h-1zM283 471h1v1h-1zM283 520h1v1h-1zM283 570h1v1h-1zM283 619h1v1h-1zM283 669h1v1h-1zM293 125h1v1h-1zM293 174h1v1h-1zM293 224h1v1h-1zM293 273h1v1h-1zM293 322h1v1h-1zM293 372h1v1h-1zM293 421h1v1h-1zM293 471h1v1h-1zM293 520h1v1h-1zM293 570h1v1h-1zM293 619h1v1h-1zM293 669h1v1h-1zM303 125h1v1h-1zM303 174h1v1h-1zM303 224h1v1h-1zM303 273h1v1h-1zM303 322h1v1h-1zM303 372h1v1h-1zM303 421h1v1h-1zM303 471h1v1h-1zM303 520h1v1h-1zM303 570h1v1h-1zM303 619h1v1h-1zM303 669h1v1h-1zM313 125h1v1h-1zM313 174h1v1h-1zM313 224h1v1h-1zM313 273h1v1h-1zM313 322h1v1h-1zM313 372h1v1h-1zM313 421h1v1h-1zM313 471h1v1h-1zM313 520h1v1h-1zM313 570h1v1h-1zM313 619h1v1h-1zM313 669h1v1h-1zM323 85h1v1h-1zM323 95h1v1h-1zM323 105h1v1h-1zM323 115h1v1h-1zM323 125h1v1h-1zM323 135h1v1h-1zM323 144h1v1h-1zM323 154h1v1h-1zM323 164h1v1h-1zM323 174h1v1h-1zM323 184h1v1h-1zM323 194h1v1h-1zM323 204h1v1h-1zM323 214h1v1h-1zM323 224h1v1h-1zM323 233h1v1h-1zM323 243h1v1h-1zM323 253h1v1h-1zM323 263h1v1h-1zM323 273h1v1h-1zM323 283h1v1h-1zM323 293h1v1h-1zM323 303h1v1h-1zM323 313h1v1h-1zM323 322h1v1h-1zM323 332h1v1h-1zM323 342h1v1h-1zM323 352h1v1h-1zM323 362h1v1h-1zM323 372h1v1h-1zM323 382h1v1h-1zM323 392h1v1h-1zM323 402h1v1h-1zM323 412h1v1h-1zM323 421h1v1h-1zM323 431h1v1h-1zM323 441h1v1h-1zM323 451h1v1h-1zM323 461h1v1h-1zM323 471h1v1h-1zM323 481h1v1h-1zM323 491h1v1h-1zM323 501h1v1h-1zM323 510h1v1h-1zM323 520h1v1h-1zM323 530h1v1h-1zM323 540h1v1h-1zM323 550h1v1h-1zM323 560h1v1h-1zM323 570h1v1h-1zM323 580h1v1h-1zM323 590h1v1h-1zM323 599h1v1h-1zM323 609h1v1h-1zM323 619h1v1h-1zM323 629h1v1h-1zM323 639h1v1h-1zM323 649h1v1h-1zM323 659h1v1h-1zM323 669h1v1h-1zM323 679h1v1h-1zM323 689h1v1h-1zM333 125h1v1h-1zM333 174h1v1h-1zM333 224h1v1h-1zM333 273h1v1h-1zM333 322h1v1h-1zM333 372h1v1h-1zM333 421h1v1h-1zM333 471h1v1h-1zM333 520h1v1h-1zM333 570h1v1h-1zM333 619h1v1h-1zM333 669h1v1h-1zM343 125h1v1h-1zM343 174h1v1h-1zM343 224h1v1h-1zM343 273h1v1h-1zM343 322h1v1h-1zM343 372h1v1h-1zM343 421h1v1h-1zM343 471h1v1h-1zM343 520h1v1h-1zM343 570h1v1h-1zM343 619h1v1h-1zM343 669h1v1h-1zM352 125h1v1h-1zM352 174h1v1h-1zM352 224h1v1h-1zM352 273h1v1h-1zM352 322h1v1h-1zM352 372h1v1h-1zM352 421h1v1h-1zM352 471h1v1h-1zM352 520h1v1h-1zM352 570h1v1h-1zM352 619h1v1h-1zM352 669h1v1h-1zM362 125h1v1h-1zM362 174h1v1h-1zM362 224h1v1h-1zM362 273h1v1h-1zM362 322h1v1h-1zM362 372h1v1h-1zM362 421h1v1h-1zM362 471h1v1h-1zM362 520h1v1h-1zM362 570h1v1h-1zM362 619h1v1h-1zM362 669h1v1h-1zM372 85h1v1h-1zM372 95h1v1h-1zM372 105h1v1h-1zM372 115h1v1h-1zM372 125h1v1h-1zM372 135h1v1h-1zM372 144h1v1h-1zM372 154h1v1h-1zM372 164h1v1h-1zM372 174h1v1h-1zM372 184h1v1h-1zM372 194h1v1h-1zM372 204h1v1h-1zM372 214h1v1h-1zM372 224h1v1h-1zM372 233h1v1h-1zM372 243h1v1h-1zM372 253h1v1h-1zM372 263h1v1h-1zM372 273h1v1h-1zM372 283h1v1h-1zM372 293h1v1h-1zM372 303h1v1h-1zM372 313h1v1h-1zM372 322h1v1h-1zM372 332h1v1h-1zM372 342h1v1h-1zM372 352h1v1h-1zM372 362h1v1h-1zM372 372h1v1h-1zM372 382h1v1h-1zM372 392h1v1h-1zM372 402h1v1h-1zM372 412h1v1h-1zM372 421h1v1h-1zM372 431h1v1h-1zM372 441h1v1h-1zM372 451h1v1h-1zM372 461h1v1h-1zM372 471h1v1h-1zM372 481h1v1h-1zM372 491h1v1h-1zM372 501h1v1h-1zM372 510h1v1h-1zM372 520h1v1h-1zM372 530h1v1h-1zM372 540h1v1h-1zM372 550h1v1h-1zM372 560h1v1h-1zM372 570h1v1h-1zM372 580h1v1h-1zM372 590h1v1h-1zM372 599h1v1h-1zM372 609h1v1h-1zM372 619h1v1h-1zM372 629h1v1h-1zM372 639h1v1h-1zM372 649h1v1h-1zM372 659h1v1h-1zM372 669h1v1h-1zM372 679h1v1h-1zM372 689h1v1h-1zM382 125h1v1h-1zM382 174h1v1h-1zM382 224h1v1h-1zM382 273h1v1h-1zM382 322h1v1h-1zM382 372h1v1h-1zM382 421h1v1h-1zM382 471h1v1h-1zM382 520h1v1h-1zM382 570h1v1h-1zM382 619h1v1h-1zM382 669h1v1h-1zM392 125h1v1h-1zM392 174h1v1h-1zM392 224h1v1h-1zM392 273h1v1h-1zM392 322h1v1h-1zM392 372h1v1h-1zM392 421h1v1h-1zM392 471h1v1h-1zM392 520h1v1h-1zM392 570h1v1h-1zM392 619h1v1h-1zM392 669h1v1h-1zM402 125h1v1h-1zM402 174h1v1h-1zM402 224h1v1h-1zM402 273h1v1h-1zM402 322h1v1h-1zM402 372h1v1h-1zM402 421h1v1h-1zM402 471h1v1h-1zM402 520h1v1h-1zM402 570h1v1h-1zM402 619h1v1h-1zM402 669h1v1h-1zM412 125h1v1h-1zM412 174h1v1h-1zM412 224h1v1h-1zM412 273h1v1h-1zM412 322h1v1h-1zM412 372h1v1h-1zM412 421h1v1h-1zM412 471h1v1h-1zM412 520h1v1h-1zM412 570h1v1h-1zM412 619h1v1h-1zM412 669h1v1h-1zM422 85h1v1h-1zM422 95h1v1h-1zM422 105h1v1h-1zM422 115h1v1h-1zM422 125h1v1h-1zM422 135h1v1h-1zM422 144h1v1h-1zM422 154h1v1h-1zM422 164h1v1h-1zM422 174h1v1h-1zM422 184h1v1h-1zM422 194h1v1h-1zM422 204h1v1h-1zM422 214h1v1h-1zM422 224h1v1h-1zM422 233h1v1h-1zM422 243h1v1h-1zM422 253h1v1h-1zM422 263h1v1h-1zM422 273h1v1h-1zM422 283h1v1h-1zM422 293h1v1h-1zM422 303h1v1h-1zM422 313h1v1h-1zM422 322h1v1h-1zM422 332h1v1h-1zM422 342h1v1h-1zM422 352h1v1h-1zM422 362h1v1h-1zM422 372h1v1h-1zM422 382h1v1h-1zM422 392h1v1h-1zM422 402h1v1h-1zM422 412h1v1h-1zM422 421h1v1h-1zM422 431h1v1h-1zM422 441h1v1h-1zM422 451h1v1h-1zM422 461h1v1h-1zM422 471h1v1h-1zM422 481h1v1h-1zM422 491h1v1h-1zM422 501h1v1h-1zM422 510h1v1h-1zM422 520h1v1h-1zM422 530h1v1h-1zM422 540h1v1h-1zM422 550h1v1h-1zM422 560h1v1h-1zM422 570h1v1h-1zM422 580h1v1h-1zM422 590h1v1h-1zM422 599h1v1h-1zM422 609h1v1h-1zM422 619h1v1h-1zM422 629h1v1h-1zM422 639h1v1h-1zM422 649h1v1h-1zM422 659h1v1h-1zM422 669h1v1h-1zM422 679h1v1h-1zM422 689h1v1h-1zM432 125h1v1h-1zM432 174h1v1h-1zM432 224h1v1h-1zM432 273h1v1h-1zM432 322h1v1h-1zM432 372h1v1h-1zM432 421h1v1h-1zM432 471h1v1h-1zM432 520h1v1h-1zM432 570h1v1h-1zM432 619h1v1h-1zM432 669h1v1h-1zM441 125h1v1h-1zM441 174h1v1h-1zM441 224h1v1h-1zM441 273h1v1h-1zM441 322h1v1h-1zM441 372h1v1h-1zM441 421h1v1h-1zM441 471h1v1h-1zM441 520h1v1h-1zM441 570h1v1h-1zM441 619h1v1h-1zM441 669h1v1h-1zM451 125h1v1h-1zM451 174h1v1h-1zM451 224h1v1h-1zM451 273h1v1h-1zM451 322h1v1h-1zM451 372h1v1h-1zM451 421h1v1h-1zM451 471h1v1h-1zM451 520h1v1h-1zM451 570h1v1h-1zM451 619h1v1h-1zM451 669h1v1h-1zM461 125h1v1h-1zM461 174h1v1h-1zM461 224h1v1h-1zM461 273h1v1h-1zM461 322h1v1h-1zM461 372h1v1h-1zM461 421h1v1h-1zM461 471h1v1h-1zM461 520h1v1h-1zM461 570h1v1h-1zM461 619h1v1h-1zM461 669h1v1h-1zM471 85h1v1h-1zM471 95h1v1h-1zM471 105h1v1h-1zM471 115h1v1h-1zM471 125h1v1h-1zM471 135h1v1h-1zM471 144h1v1h-1zM471 154h1v1h-1zM471 164h1v1h-1zM471 174h1v1h-1zM471 184h1v1h-1zM471 194h1v1h-1zM471 204h1v1h-1zM471 214h1v1h-1zM471 224h1v1h-1zM471 233h1v1h-1zM471 243h1v1h-1zM471 253h1v1h-1zM471 263h1v1h-1zM471 273h1v1h-1zM471 283h1v1h-1zM471 293h1v1h-1zM471 303h1v1h-1zM471 313h1v1h-1zM471 322h1v1h-1zM471 332h1v1h-1zM471 342h1v1h-1zM471 352h1v1h-1zM471 362h1v1h-1zM471 372h1v1h-1zM471 382h1v1h-1zM471 392h1v1h-1zM471 402h1v1h-1zM471 412h1v1h-1zM471 421h1v1h-1zM471 431h1v1h-1zM471 441h1v1h-1zM471 451h1v1h-1zM471 461h1v1h-1zM471 471h1v1h-1zM471 481h1v1h-1zM471 491h1v1h-1zM471 501h1v1h-1zM471 510h1v1h-1zM471 520h1v1h-1zM471 530h1v1h-1zM471 540h1v1h-1zM471 550h1v1h-1zM471 560h1v1h-1zM471 570h1v1h-1zM471 580h1v1h-1zM471 590h1v1h-1zM471 599h1v1h-1zM471 609h1v1h-1zM471 619h1v1h-1zM471 629h1v1h-1zM471 639h1v1h-1zM471 649h1v1h-1zM471 659h1v1h-1zM471 669h1v1h-1zM471 679h1v1h-1zM471 689h1v1h-1zM481 125h1v1h-1zM481 174h1v1h-1zM481 224h1v1h-1zM481 273h1v1h-1zM481 322h1v1h-1zM481 372h1v1h-1zM481 421h1v1h-1zM481 471h1v1h-1zM481 520h1v1h-1zM481 570h1v1h-1zM481 619h1v1h-1zM481 669h1v1h-1zM491 125h1v1h-1zM491 174h1v1h-1zM491 224h1v1h-1zM491 273h1v1h-1zM491 322h1v1h-1zM491 372h1v1h-1zM491 421h1v1h-1zM491 471h1v1h-1zM491 520h1v1h-1zM491 570h1v1h-1zM491 619h1v1h-1zM491 669h1v1h-1zM501 125h1v1h-1zM501 174h1v1h-1zM501 224h1v1h-1zM501 273h1v1h-1zM501 322h1v1h-1zM501 372h1v1h-1zM501 421h1v1h-1zM501 471h1v1h-1zM501 520h1v1h-1zM501 570h1v1h-1zM501 619h1v1h-1zM501 669h1v1h-1zM511 125h1v1h-1zM511 174h1v1h-1zM511 224h1v1h-1zM511 273h1v1h-1zM511 322h1v1h-1zM511 372h1v1h-1zM511 421h1v1h-1zM511 471h1v1h-1zM511 520h1v1h-1zM511 570h1v1h-1zM511 619h1v1h-1zM511 669h1v1h-1zM521 85h1v1h-1zM521 95h1v1h-1zM521 105h1v1h-1zM521 115h1v1h-1zM521 125h1v1h-1zM521 135h1v1h-1zM521 144h1v1h-1zM521 154h1v1h-1zM521 164h1v1h-1zM521 174h1v1h-1zM521 184h1v1h-1zM521 194h1v1h-1zM521 204h1v1h-1zM521 214h1v1h-1zM521 224h1v1h-1zM521 233h1v1h-1zM521 243h1v1h-1zM521 253h1v1h-1zM521 263h1v1h-1zM521 273h1v1h-1zM521 283h1v1h-1zM521 293h1v1h-1zM521 303h1v1h-1zM521 313h1v1h-1zM521 322h1v1h-1zM521 332h1v1h-1zM521 342h1v1h-1zM521 352h1v1h-1zM521 362h1v1h-1zM521 372h1v1h-1zM521 382h1v1h-1zM521 392h1v1h-1zM521 402h1v1h-1zM521 412h1v1h-1zM521 421h1v1h-1zM521 431h1v1h-1zM521 441h1v1h-1zM521 451h1v1h-1zM521 461h1v1h-1zM521 471h1v1h-1zM521 481h1v1h-1zM521 491h1v1h-1zM521 501h1v1h-1zM521 510h1v1h-1zM521 520h1v1h-1zM521 530h1v1h-1zM521 540h1v1h-1zM521 550h1v1h-1zM521 560h1v1h-1zM521 570h1v1h-1zM521 580h1v1h-1zM521 590h1v1h-1zM521 599h1v1h-1zM521 609h1v1h-1zM521 619h1v1h-1zM521 629h1v1h-1zM521 639h1v1h-1zM521 649h1v1h-1zM521 659h1v1h-1zM521 669h1v1h-1zM521 679h1v1h-1zM521 689h1v1h-1zM531 125h1v1h-1zM531 174h1v1h-1zM531 224h1v1h-1zM531 273h1v1h-1zM531 322h1v1h-1zM531 372h1v1h-1zM531 421h1v1h-1zM531 471h1v1h-1zM531 520h1v1h-1zM531 570h1v1h-1zM531 619h1v1h-1zM531 669h1v1h-1zM540 125h1v1h-1zM540 174h1v1h-1zM540 224h1v1h-1zM540 273h1v1h-1zM540 322h1v1h-1zM540 372h1v1h-1zM540 421h1v1h-1zM540 471h1v1h-1zM540 520h1v1h-1zM540 570h1v1h-1zM540 619h1v1h-1zM540 669h1v1h-1zM550 125h1v1h-1zM550 174h1v1h-1zM550 224h1v1h-1zM550 273h1v1h-1zM550 322h1v1h-1zM550 372h1v1h-1zM550 421h1v1h-1zM550 471h1v1h-1zM550 520h1v1h-1zM550 570h1v1h-1zM550 619h1v1h-1zM550 669h1v1h-1zM560 125h1v1h-1zM560 174h1v1h-1zM560 224h1v1h-1zM560 273h1v1h-1zM560 322h1v1h-1zM560 372h1v1h-1zM560 421h1v1h-1zM560 471h1v1h-1zM560 520h1v1h-1zM560 570h1v1h-1zM560 619h1v1h-1zM560 669h1v1h-1zM570 85h1v1h-1zM570 95h1v1h-1zM570 105h1v1h-1zM570 115h1v1h-1zM570 125h1v1h-1zM570 135h1v1h-1zM570 144h1v1h-1zM570 154h1v1h-1zM570 164h1v1h-1zM570 174h1v1h-1zM570 184h1v1h-1zM570 194h1v1h-1zM570 204h1v1h-1zM570 214h1v1h-1zM570 224h1v1h-1zM570 233h1v1h-1zM570 243h1v1h-1zM570 253h1v1h-1zM570 263h1v1h-1zM570 273h1v1h-1zM570 283h1v1h-1zM570 293h1v1h-1zM570 303h1v1h-1zM570 313h1v1h-1zM570 322h1v1h-1zM570 332h1v1h-1zM570 342h1v1h-1zM570 352h1v1h-1zM570 362h1v1h-1zM570 372h1v1h-1zM570 382h1v1h-1zM570 392h1v1h-1zM570 402h1v1h-1zM570 412h1v1h-1zM570 421h1v1h-1zM570 431h1v1h-1zM570 441h1v1h-1zM570 451h1v1h-1zM570 461h1v1h-1zM570 471h1v1h-1zM570 481h1v1h-1zM570 491h1v1h-1zM570 501h1v1h-1zM570 510h1v1h-1zM570 520h1v1h-1zM570 530h1v1h-1zM570 540h1v1h-1zM570 550h1v1h-1zM570 560h1v1h-1zM570 570h1v1h-1zM570 580h1v1h-1zM570 590h1v1h-1zM570 599h1v1h-1zM570 609h1v1h-1zM570 619h1v1h-1zM570 629h1v1h-1zM570 639h1v1h-1zM570 649h1v1h-1zM570 659h1v1h-1zM570 669h1v1h-1zM570 679h1v1h-1zM570 689h1v1h-1zM580 125h1v1h-1zM580 174h1v1h-1zM580 224h1v1h-1zM580 273h1v1h-1zM580 322h1v1h-1zM580 372h1v1h-1zM580 421h1v1h-1zM580 471h1v1h-1zM580 520h1v1h-1zM580 570h1v1h-1zM580 619h1v1h-1zM580 669h1v1h-1zM590 125h1v1h-1zM590 174h1v1h-1zM590 224h1v1h-1zM590 273h1v1h-1zM590 322h1v1h-1zM590 372h1v1h-1zM590 421h1v1h-1zM590 471h1v1h-1zM590 520h1v1h-1zM590 570h1v1h-1zM590 619h1v1h-1zM590 669h1v1h-1zM600 125h1v1h-1zM600 174h1v1h-1zM600 224h1v1h-1zM600 273h1v1h-1zM600 322h1v1h-1zM600 372h1v1h-1zM600 421h1v1h-1zM600 471h1v1h-1zM600 520h1v1h-1zM600 570h1v1h-1zM600 619h1v1h-1zM600 669h1v1h-1zM610 125h1v1h-1zM610 174h1v1h-1zM610 224h1v1h-1zM610 273h1v1h-1zM610 322h1v1h-1zM610 372h1v1h-1zM610 421h1v1h-1zM610 471h1v1h-1zM610 520h1v1h-1zM610 570h1v1h-1zM610 619h1v1h-1zM610 669h1v1h-1zM620 85h1v1h-1zM620 95h1v1h-1zM620 105h1v1h-1zM620 115h1v1h-1zM620 125h1v1h-1zM620 135h1v1h-1zM620 144h1v1h-1zM620 154h1v1h-1zM620 164h1v1h-1zM620 174h1v1h-1zM620 184h1v1h-1zM620 194h1v1h-1zM620 204h1v1h-1zM620 214h1v1h-1zM620 224h1v1h-1zM620 233h1v1h-1zM620 243h1v1h-1zM620 253h1v1h-1zM620 263h1v1h-1zM620 273h1v1h-1zM620 283h1v1h-1zM620 293h1v1h-1zM620 303h1v1h-1zM620 313h1v1h-1zM620 322h1v1h-1zM620 332h1v1h-1zM620 342h1v1h-1zM620 352h1v1h-1zM620 362h1v1h-1zM620 372h1v1h-1zM620 382h1v1h-1zM620 392h1v1h-1zM620 402h1v1h-1zM620 412h1v1h-1zM620 421h1v1h-1zM620 431h1v1h-1zM620 441h1v1h-1zM620 451h1v1h-1zM620 461h1v1h-1zM620 471h1v1h-1zM620 481h1v1h-1zM620 491h1v1h-1zM620 501h1v1h-1zM620 510h1v1h-1zM620 520h1v1h-1zM620 530h1v1h-1zM620 540h1v1h-1zM620 550h1v1h-1zM620 560h1v1h-1zM620 570h1v1h-1zM620 580h1v1h-1zM620 590h1v1h-1zM620 599h1v1h-1zM620 609h1v1h-1zM620 619h1v1h-1zM620 629h1v1h-1zM620 639h1v1h-1zM620 649h1v1h-1zM620 659h1v1h-1zM620 669h1v1h-1zM620 679h1v1h-1zM620 689h1v1h-1zM629 125h1v1h-1zM629 174h1v1h-1zM629 224h1v1h-1zM629 273h1v1h-1zM629 322h1v1h-1zM629 372h1v1h-1zM629 421h1v1h-1zM629 471h1v1h-1zM629 520h1v1h-1zM629 570h1v1h-1zM629 619h1v1h-1zM629 669h1v1h-1zM639 125h1v1h-1zM639 174h1v1h-1zM639 224h1v1h-1zM639 273h1v1h-1zM639 322h1v1h-1zM639 372h1v1h-1zM639 421h1v1h-1zM639 471h1v1h-1zM639 520h1v1h-1zM639 570h1v1h-1zM639 619h1v1h-1zM639 669h1v1h-1zM649 125h1v1h-1zM649 174h1v1h-1zM649 224h1v1h-1zM649 273h1v1h-1zM649 322h1v1h-1zM649 372h1v1h-1zM649 421h1v1h-1zM649 471h1v1h-1zM649 520h1v1h-1zM649 570h1v1h-1zM649 619h1v1h-1zM649 669h1v1h-1zM659 125h1v1h-1zM659 174h1v1h-1zM659 224h1v1h-1zM659 273h1v1h-1zM659 322h1v1h-1zM659 372h1v1h-1zM659 421h1v1h-1zM659 471h1v1h-1zM659 520h1v1h-1zM659 570h1v1h-1zM659 619h1v1h-1zM659 669h1v1h-1zM669 85h1v1h-1zM669 95h1v1h-1zM669 105h1v1h-1zM669 115h1v1h-1zM669 125h1v1h-1zM669 135h1v1h-1zM669 144h1v1h-1zM669 154h1v1h-1zM669 164h1v1h-1zM669 174h1v1h-1zM669 184h1v1h-1zM669 194h1v1h-1zM669 204h1v1h-1zM669 214h1v1h-1zM669 224h1v1h-1zM669 233h1v1h-1zM669 243h1v1h-1zM669 253h1v1h-1zM669 263h1v1h-1zM669 273h1v1h-1zM669 283h1v1h-1zM669 293h1v1h-1zM669 303h1v1h-1zM669 313h1v1h-1zM669 322h1v1h-1zM669 332h1v1h-1zM669 342h1v1h-1zM669 352h1v1h-1zM669 362h1v1h-1zM669 372h1v1h-1zM669 382h1v1h-1zM669 392h1v1h-1zM669 402h1v1h-1zM669 412h1v1h-1zM669 421h1v1h-1zM669 431h1v1h-1zM669 441h1v1h-1zM669 451h1v1h-1zM669 461h1v1h-1zM669 471h1v1h-1zM669 481h1v1h-1zM669 491h1v1h-1zM669 501h1v1h-1zM669 510h1v1h-1zM669 520h1v1h-1zM669 530h1v1h-1zM669 540h1v1h-1zM669 550h1v1h-1zM669 560h1v1h-1zM669 570h1v1h-1zM669 580h1v1h-1zM669 590h1v1h-1zM669 599h1v1h-1zM669 609h1v1h-1zM669 619h1v1h-1zM669 629h1v1h-1zM669 639h1v1h-1zM669 649h1v1h-1zM669 659h1v1h-1zM669 669h1v1h-1zM669 679h1v1h-1zM669 689h1v1h-1zM679 125h1v1h-1zM679 174h1v1h-1zM679 224h1v1h-1zM679 273h1v1h-1zM679 322h1v1h-1zM679 372h1v1h-1zM679 421h1v1h-1zM679 471h1v1h-1zM679 520h1v1h-1zM679 570h1v1h-1zM679 619h1v1h-1zM679 669h1v1h-1zM689 125h1v1h-1zM689 174h1v1h-1zM689 224h1v1h-1zM689 273h1v1h-1zM689 322h1v1h-1zM689 372h1v1h-1zM689 421h1v1h-1zM689 471h1v1h-1zM689 520h1v1h-1zM689 570h1v1h-1zM689 619h1v1h-1zM689 669h1v1h-1zM699 125h1v1h-1zM699 174h1v1h-1zM699 224h1v1h-1zM699 273h1v1h-1zM699 322h1v1h-1zM699 372h1v1h-1zM699 421h1v1h-1zM699 471h1v1h-1zM699 520h1v1h-1zM699 570h1v1h-1zM699 619h1v1h-1zM699 669h1v1h-1zM709 125h1v1h-1zM709 174h1v1h-1zM709 224h1v1h-1zM709 273h1v1h-1zM709 322h1v1h-1zM709 372h1v1h-1zM709 421h1v1h-1zM709 471h1v1h-1zM709 520h1v1h-1zM709 570h1v1h-1zM709 619h1v1h-1zM709 669h1v1h-1zM718 85h1v1h-1zM718 95h1v1h-1zM718 105h1v1h-1zM718 115h1v1h-1zM718 125h1v1h-1zM718 135h1v1h-1zM718 144h1v1h-1zM718 154h1v1h-1zM718 164h1v1h-1zM718 174h1v1h-1zM718 184h1v1h-1zM718 194h1v1h-1zM718 204h1v1h-1zM718 214h1v1h-1zM718 224h1v1h-1zM718 233h1v1h-1zM718 243h1v1h-1zM718 253h1v1h-1zM718 263h1v1h-1zM718 273h1v1h-1zM718 283h1v1h-1zM718 293h1v1h-1zM718 303h1v1h-1zM718 313h1v1h-1zM718 322h1v1h-1zM718 332h1v1h-1zM718 342h1v1h-1zM718 352h1v1h-1zM718 362h1v1h-1zM718 372h1v1h-1zM718 382h1v1h-1zM718 392h1v1h-1zM718 402h1v1h-1zM718 412h1v1h-1zM718 421h1v1h-1zM718 431h1v1h-1zM718 441h1v1h-1zM718 451h1v1h-1zM718 461h1v1h-1zM718 471h1v1h-1zM718 481h1v1h-1zM718 491h1v1h-1zM718 501h1v1h-1zM718 510h1v1h-1zM718 520h1v1h-1zM718 530h1v1h-1zM718 540h1v1h-1zM718 550h1v1h-1zM718 560h1v1h-1zM718 570h1v1h-1zM718 580h1v1h-1zM718 590h1v1h-1zM718 599h1v1h-1zM718 609h1v1h-1zM718 619h1v1h-1zM718 629h1v1h-1zM718 639h1v1h-1zM718 649h1v1h-1zM718 659h1v1h-1zM718 669h1v1h-1zM718 679h1v1h-1zM718 689h1v1h-1zM728 125h1v1h-1zM728 174h1v1h-1zM728 224h1v1h-1zM728 273h1v1h-1zM728 322h1v1h-1zM728 372h1v1h-1zM728 421h1v1h-1zM728 471h1v1h-1zM728 520h1v1h-1zM728 570h1v1h-1zM728 619h1v1h-1zM728 669h1v1h-1zM738 125h1v1h-1zM738 174h1v1h-1zM738 224h1v1h-1zM738 273h1v1h-1zM738 322h1v1h-1zM738 372h1v1h-1zM738 421h1v1h-1zM738 471h1v1h-1zM738 520h1v1h-1zM738 570h1v1h-1zM738 619h1v1h-1zM738 669h1v1h-1zM748 125h1v1h-1zM748 174h1v1h-1zM748 224h1v1h-1zM748 273h1v1h-1zM748 322h1v1h-1zM748 372h1v1h-1zM748 421h1v1h-1zM748 471h1v1h-1zM748 520h1v1h-1zM748 570h1v1h-1zM748 619h1v1h-1zM748 669h1v1h-1zM758 125h1v1h-1zM758 174h1v1h-1zM758 224h1v1h-1zM758 273h1v1h-1zM758 322h1v1h-1zM758 372h1v1h-1zM758 421h1v1h-1zM758 471h1v1h-1zM758 520h1v1h-1zM758 570h1v1h-1zM758 619h1v1h-1zM758 669h1v1h-1zM768 85h1v1h-1zM768 95h1v1h-1zM768 105h1v1h-1zM768 115h1v1h-1zM768 125h1v1h-1zM768 135h1v1h-1zM768 144h1v1h-1zM768 154h1v1h-1zM768 164h1v1h-1zM768 174h1v1h-1zM768 184h1v1h-1zM768 194h1v1h-1zM768 204h1v1h-1zM768 214h1v1h-1zM768 224h1v1h-1zM768 233h1v1h-1zM768 243h1v1h-1zM768 253h1v1h-1zM768 263h1v1h-1zM768 273h1v1h-1zM768 283h1v1h-1zM768 293h1v1h-1zM768 303h1v1h-1zM768 313h1v1h-1zM768 322h1v1h-1zM768 332h1v1h-1zM768 342h1v1h-1zM768 352h1v1h-1zM768 362h1v1h-1zM768 372h1v1h-1zM768 382h1v1h-1zM768 392h1v1h-1zM768 402h1v1h-1zM768 412h1v1h-1zM768 421h1v1h-1zM768 431h1v1h-1zM768 441h1v1h-1zM768 451h1v1h-1zM768 461h1v1h-1zM768 471h1v1h-1zM768 481h1v1h-1zM768 491h1v1h-1zM768 501h1v1h-1zM768 510h1v1h-1zM768 520h1v1h-1zM768 530h1v1h-1zM768 540h1v1h-1zM768 550h1v1h-1zM768 560h1v1h-1zM768 570h1v1h-1zM768 580h1v1h-1zM768 590h1v1h-1zM768 599h1v1h-1zM768 609h1v1h-1zM768 619h1v1h-1zM768 629h1v1h-1zM768 639h1v1h-1zM768 649h1v1h-1zM768 659h1v1h-1zM768 669h1v1h-1zM768 679h1v1h-1zM768 689h1v1h-1zM778 125h1v1h-1zM778 174h1v1h-1zM778 224h1v1h-1zM778 273h1v1h-1zM778 322h1v1h-1zM778 372h1v1h-1zM778 421h1v1h-1zM778 471h1v1h-1zM778 520h1v1h-1zM778 570h1v1h-1zM778 619h1v1h-1zM778 669h1v1h-1zM788 125h1v1h-1zM788 174h1v1h-1zM788 224h1v1h-1zM788 273h1v1h-1zM788 322h1v1h-1zM788 372h1v1h-1zM788 421h1v1h-1zM788 471h1v1h-1zM788 520h1v1h-1zM788 570h1v1h-1zM788 619h1v1h-1zM788 669h1v1h-1zM798 125h1v1h-1zM798 174h1v1h-1zM798 224h1v1h-1zM798 273h1v1h-1zM798 322h1v1h-1zM798 372h1v1h-1zM798 421h1v1h-1zM798 471h1v1h-1zM798 520h1v1h-1zM798 570h1v1h-1zM798 619h1v1h-1zM798 669h1v1h-1zM807 125h1v1h-1zM807 174h1v1h-1zM807 224h1v1h-1zM807 273h1v1h-1zM807 322h1v1h-1zM807 372h1v1h-1zM807 421h1v1h-1zM807 471h1v1h-1zM807 520h1v1h-1zM807 570h1v1h-1zM807 619h1v1h-1zM807 669h1v1h-1zM817 85h1v1h-1zM817 95h1v1h-1zM817 105h1v1h-1zM817 115h1v1h-1zM817 125h1v1h-1zM817 135h1v1h-1zM817 144h1v1h-1zM817 154h1v1h-1zM817 164h1v1h-1zM817 174h1v1h-1zM817 184h1v1h-1zM817 194h1v1h-1zM817 204h1v1h-1zM817 214h1v1h-1zM817 224h1v1h-1zM817 233h1v1h-1zM817 243h1v1h-1zM817 253h1v1h-1zM817 263h1v1h-1zM817 273h1v1h-1zM817 283h1v1h-1zM817 293h1v1h-1zM817 303h1v1h-1zM817 313h1v1h-1zM817 322h1v1h-1zM817 332h1v1h-1zM817 342h1v1h-1zM817 352h1v1h-1zM817 362h1v1h-1zM817 372h1v1h-1zM817 382h1v1h-1zM817 392h1v1h-1zM817 402h1v1h-1zM817 412h1v1h-1zM817 421h1v1h-1zM817 431h1v1h-1zM817 441h1v1h-1zM817 451h1v1h-1zM817 461h1v1h-1zM817 471h1v1h-1zM817 481h1v1h-1zM817 491h1v1h-1zM817 501h1v1h-1zM817 510h1v1h-1zM817 520h1v1h-1zM817 530h1v1h-1zM817 540h1v1h-1zM817 550h1v1h-1zM817 560h1v1h-1zM817 570h1v1h-1zM817 580h1v1h-1zM817 590h1v1h-1zM817 599h1v1h-1zM817 609h1v1h-1zM817 619h1v1h-1zM817 629h1v1h-1zM817 639h1v1h-1zM817 649h1v1h-1zM817 659h1v1h-1zM817 669h1v1h-1zM817 679h1v1h-1zM817 689h1v1h-1zM827 125h1v1h-1zM827 174h1v1h-1zM827 224h1v1h-1zM827 273h1v1h-1zM827 322h1v1h-1zM827 372h1v1h-1zM827 421h1v1h-1zM827 471h1v1h-1zM827 520h1v1h-1zM827 570h1v1h-1zM827 619h1v1h-1zM827 669h1v1h-1zM837 125h1v1h-1zM837 174h1v1h-1zM837 224h1v1h-1zM837 273h1v1h-1zM837 322h1v1h-1zM837 372h1v1h-1zM837 421h1v1h-1zM837 471h1v1h-1zM837 520h1v1h-1zM837 570h1v1h-1zM837 619h1v1h-1zM837 669h1v1h-1zM847 125h1v1h-1zM847 174h1v1h-1zM847 224h1v1h-1zM847 273h1v1h-1zM847 322h1v1h-1zM847 372h1v1h-1zM847 421h1v1h-1zM847 471h1v1h-1zM847 520h1v1h-1zM847 570h1v1h-1zM847 619h1v1h-1zM847 669h1v1h-1zM857 125h1v1h-1zM857 174h1v1h-1zM857 224h1v1h-1zM857 273h1v1h-1zM857 322h1v1h-1zM857 372h1v1h-1zM857 421h1v1h-1zM857 471h1v1h-1zM857 520h1v1h-1zM857 570h1v1h-1zM857 619h1v1h-1zM857 669h1v1h-1z" fill="#9a9a9a"/><path d="M272 174h3v1h-3z M273 173h1v1h-1z M273 175h1v1h-1zM272 273h3v1h-3z M273 272h1v1h-1z M273 274h1v1h-1zM272 372h3v1h-3z M273 371h1v1h-1z M273 373h1v1h-1zM272 471h3v1h-3z M273 470h1v1h-1z M273 472h1v1h-1zM272 570h3v1h-3z M273 569h1v1h-1z M273 571h1v1h-1zM272 669h3v1h-3z M273 668h1v1h-1z M273 670h1v1h-1zM371 174h3v1h-3z M372 173h1v1h-1z M372 175h1v1h-1zM371 273h3v1h-3z M372 272h1v1h-1z M372 274h1v1h-1zM371 372h3v1h-3z M372 371h1v1h-1z M372 373h1v1h-1zM371 471h3v1h-3z M372 470h1v1h-1z M372 472h1v1h-1zM371 570h3v1h-3z M372 569h1v1h-1z M372 571h1v1h-1zM371 669h3v1h-3z M372 668h1v1h-1z M372 670h1v1h-1zM470 174h3v1h-3z M471 173h1v1h-1z M471 175h1v1h-1zM470 273h3v1h-3z M471 272h1v1h-1z M471 274h1v1h-1zM470 372h3v1h-3z M471 371h1v1h-1z M471 373h1v1h-1zM470 471h3v1h-3z M471 470h1v1h-1z M471 472h1v1h-1zM470 570h3v1h-3z M471 569h1v1h-1z M471 571h1v1h-1zM470 669h3v1h-3z M471 668h1v1h-1z M471 670h1v1h-1zM569 174h3v1h-3z M570 173h1v1h-1z M570 175h1v1h-1zM569 273h3v1h-3z M570 272h1v1h-1z M570 274h1v1h-1zM569 372h3v1h-3z M570 371h1v1h-1z M570 373h1v1h-1zM569 471h3v1h-3z M570 470h1v1h-1z M570 472h1v1h-1zM569 570h3v1h-3z M570 569h1v1h-1z M570 571h1v1h-1zM569 669h3v1h-3z M570 668h1v1h-1z M570 670h1v1h-1zM668 174h3v1h-3z M669 173h1v1h-1z M669 175h1v1h-1zM668 273h3v1h-3z M669 272h1v1h-1z M669 274h1v1h-1zM668 372h3v1h-3z M669 371h1v1h-1z M669 373h1v1h-1zM668 471h3v1h-3z M669 470h1v1h-1z M669 472h1v1h-1zM668 570h3v1h-3z M669 569h1v1h-1z M669 571h1v1h-1zM668 669h3v1h-3z M669 668h1v1h-1z M669 670h1v1h-1zM767 174h3v1h-3z M768 173h1v1h-1z M768 175h1v1h-1zM767 273h3v1h-3z M768 272h1v1h-1z M768 274h1v1h-1zM767 372h3v1h-3z M768 371h1v1h-1z M768 373h1v1h-1zM767 471h3v1h-3z M768 470h1v1h-1z M768 472h1v1h-1zM767 570h3v1h-3z M768 569h1v1h-1z M768 571h1v1h-1zM767 669h3v1h-3z M768 668h1v1h-1z M768 670h1v1h-1z" fill="#808080"/></svg><div class="a" style="left:179px;top:80px;width:689px;height:620px;border:2px solid #4a4a4a;border-width:1.5px 2px 2px 1.5px;border-right-color:#5e5e5e;border-bottom-color:#5e5e5e"></div><svg style="left:179px;top:80px" width="360" height="24" viewBox="0 0 360 24"><path d="M0 22.5 H349 L357.5 15 V0" fill="none" stroke="#4a4a4a" stroke-width="1.5"/></svg><div class="t" style="left:185.5px;top:86px;font-size:11.87px;color:#000;font-weight:bold;-webkit-text-stroke:0.1px #000">package Class Diagram</div><div class="t" style="left:324px;top:86px;font-size:11.87px;color:#000;letter-spacing:0.4px">Classes</div><div class="t" style="left:373px;top:86px;font-size:11.87px;color:#000">[</div><svg style="left:380px;top:83px" width="16" height="16" viewBox="0 0 16 16">
<path d="M0.5 0.5 H11.5 L15.5 4.5 V15.5 H0.5 Z" fill="#d8d8d8" stroke="#707070"/>
<path d="M11.5 0.5 V4.5 H15.5" fill="#fafafa" stroke="#a0a0a0"/>
<rect x="5.5" y="3.5" width="4" height="3" fill="#c9dcf2" stroke="#444" stroke-width="1"/>
<path d="M7.5 6.5 V8.5 M4.5 8.5 H10.5 M4.5 8.5 V10 M10.5 8.5 V10" stroke="#444" fill="none"/>
<rect x="2.5" y="10.5" width="4" height="3" fill="#c9dcf2" stroke="#444"/>
<rect x="8.5" y="10.5" width="4" height="3" fill="#c9dcf2" stroke="#444"/>
</svg><div class="t" style="left:399.5px;top:85px;font-size:12px;color:#000">Product Query Classes</div><div class="t" style="left:529.3px;top:85.3px;font-size:11.87px;color:#000">]</div><div class="a" style="left:334px;top:137px;width:133px;height:60px;background:#c2c2c2"></div><div class="a" style="left:332px;top:135px;width:133px;height:60px;background:#ffcc99;border:1px solid #3c3c3c"></div><div class="a" style="left:332px;top:155px;width:133px;height:1px;background:#3c3c3c"></div><div class="t" style="left:344.5px;top:140.3px;font-size:11.87px;font-weight:bold;color:#000;;-webkit-text-stroke:0.1px currentColor">SearchParameters</div><div class="t" style="left:335px;top:160.8px;font-size:11.87px;font-weight:normal;color:#000;">+keywords<span style="color:#3c3c3c"> : String [0..*]</span></div><div class="t" style="left:335px;top:175.8px;font-size:11.87px;font-weight:normal;color:#000;">+title<span style="color:#3c3c3c"> : String</span></div><div class="a" style="left:375px;top:255px;width:50px;height:31px;background:#c2c2c2"></div><div class="a" style="left:373px;top:253px;width:50px;height:31px;background:#ffcc99;border:1px solid #3c3c3c"></div><div class="t" style="left:376px;top:258.8px;font-size:11.87px;font-weight:bold;color:#000;;-webkit-text-stroke:0.1px currentColor">Catalog</div><div class="a" style="left:397.4px;top:284px;width:1.4px;height:118px;background:#858585"></div><div class="t" style="left:402px;top:288.8px;font-size:11.87px;font-weight:normal;color:#000;">1</div><svg style="left:331px;top:326px" width="11" height="15" viewBox="0 0 11 15"><path d="M0.3 0.2 L10.5 1 L5 14.5 Z" fill="#000"/></svg><div class="t" style="left:346.5px;top:327.8px;font-size:11.87px;font-weight:normal;color:#000;">contains</div><div class="t" style="left:312.5px;top:369.3px;font-size:11.87px;font-weight:normal;color:#1a1af0;"><span style="color:#6060ff">«</span>E2EAttribute<span style="color:#6060ff">»</span></div><div class="t" style="left:339px;top:386.3px;font-size:11.87px;font-weight:normal;color:#000;">+products</div><div class="t" style="left:400px;top:369.3px;font-size:11.87px;font-weight:normal;color:#000;">{externalName = "product"}</div><div class="t" style="left:400px;top:386.3px;font-size:11.87px;font-weight:normal;color:#000;">0..*</div><div class="a" style="left:295px;top:403px;width:209px;height:153px;background:#c2c2c2"></div><div class="a" style="left:293px;top:401px;width:209px;height:153px;background:#ffcc99;border:1px solid #3c3c3c"></div><div class="a" style="left:293px;top:439px;width:209px;height:1px;background:#3c3c3c"></div><div class="t" style="left:293px;top:407.3px;width:209px;text-align:center;font-size:11.87px;color:#5a3cd8">«XML»</div><div class="t" style="left:293px;top:424px;width:209px;text-align:center;font-size:11.87px;font-weight:bold;color:#000;-webkit-text-stroke:0.1px #000">Product</div><div class="t" style="left:297px;top:444.8px;font-size:11.87px;font-weight:normal;color:#000;"><span style="color:#7c7c7c">«XMLElement»</span>+category<span style="color:#3c3c3c"> : String</span></div><div class="t" style="left:297px;top:459.6px;font-size:11.87px;font-weight:normal;color:#000;"><span style="color:#7c7c7c">«XMLElement»</span>+link<span style="color:#3c3c3c"> : String</span></div><div class="t" style="left:297px;top:474.4px;font-size:11.87px;font-weight:normal;color:#000;"><span style="color:#7c7c7c">«XMLElement»</span>+manufacturer<span style="color:#3c3c3c"> : String</span></div><div class="t" style="left:297px;top:489.2px;font-size:11.87px;font-weight:normal;color:#000;"><span style="color:#7c7c7c">«XMLElement»</span>+priceUSD<span style="color:#3c3c3c"> : Float</span></div><div class="t" style="left:297px;top:504.0px;font-size:11.87px;font-weight:normal;color:#000;"><span style="color:#7c7c7c">«XMLElement»</span>+seller<span style="color:#3c3c3c"> : String</span></div><div class="t" style="left:297px;top:518.8px;font-size:11.87px;font-weight:normal;color:#000;"><span style="color:#7c7c7c">«XMLElement»</span>+title<span style="color:#3c3c3c"> : String</span></div><div class="t" style="left:297px;top:533.6px;font-size:11.87px;font-weight:normal;color:#000;"><span style="color:#7c7c7c">«XMLElement»</span>+type<span style="color:#3c3c3c"> : String</span></div><div class="a" style="left:396.5px;top:562px;width:1.3px;height:48px;background:#606060"></div><svg style="left:391px;top:553px" width="13" height="11" viewBox="0 0 13 11"><path d="M6.5 0.8 L11.5 9.5 H1.5 Z" fill="#fff" stroke="#555" stroke-width="1.2"/></svg><div class="a" style="left:346px;top:611px;width:108px;height:46px;background:#c2c2c2"></div><div class="a" style="left:344px;top:609px;width:108px;height:46px;background:#ffcc99;border:1px solid #3c3c3c"></div><div class="a" style="left:344px;top:630px;width:108px;height:1px;background:#3c3c3c"></div><div class="t" style="left:347px;top:614.8px;font-size:11.87px;font-weight:bold;color:#000;;-webkit-text-stroke:0.1px currentColor">ProductExtended</div><div class="t" style="left:347px;top:635.8px;font-size:11.87px;font-weight:normal;color:#000;">+priceCHF<span style="color:#3c3c3c"> : Float</span></div><div class="a" style="left:882px;top:75px;width:15px;height:639px;background:#f0f0f0"></div><div class="a" style="left:882px;top:92px;width:15px;height:345px;background:#cdcdcd"></div><svg style="left:885px;top:81px" width="9" height="6" viewBox="0 0 9 6"><path d="M0.8 5 L4.5 1.3 L8.2 5" stroke="#606060" stroke-width="1.8" fill="none"/></svg><svg style="left:885px;top:703px" width="9" height="6" viewBox="0 0 9 6"><path d="M0.8 1 L4.5 4.7 L8.2 1" stroke="#606060" stroke-width="1.8" fill="none"/></svg><div class="a" style="left:174px;top:715px;width:708px;height:15px;background:#f0f0f0"></div><div class="a" style="left:191px;top:715px;width:400px;height:15px;background:#cdcdcd"></div><svg style="left:179px;top:718px" width="6" height="9" viewBox="0 0 6 9"><path d="M5 0.8 L1.3 4.5 L5 8.2" stroke="#606060" stroke-width="1.8" fill="none"/></svg><svg style="left:870px;top:718px" width="6" height="9" viewBox="0 0 6 9"><path d="M1 0.8 L4.7 4.5 L1 8.2" stroke="#606060" stroke-width="1.8" fill="none"/></svg></body></html>
